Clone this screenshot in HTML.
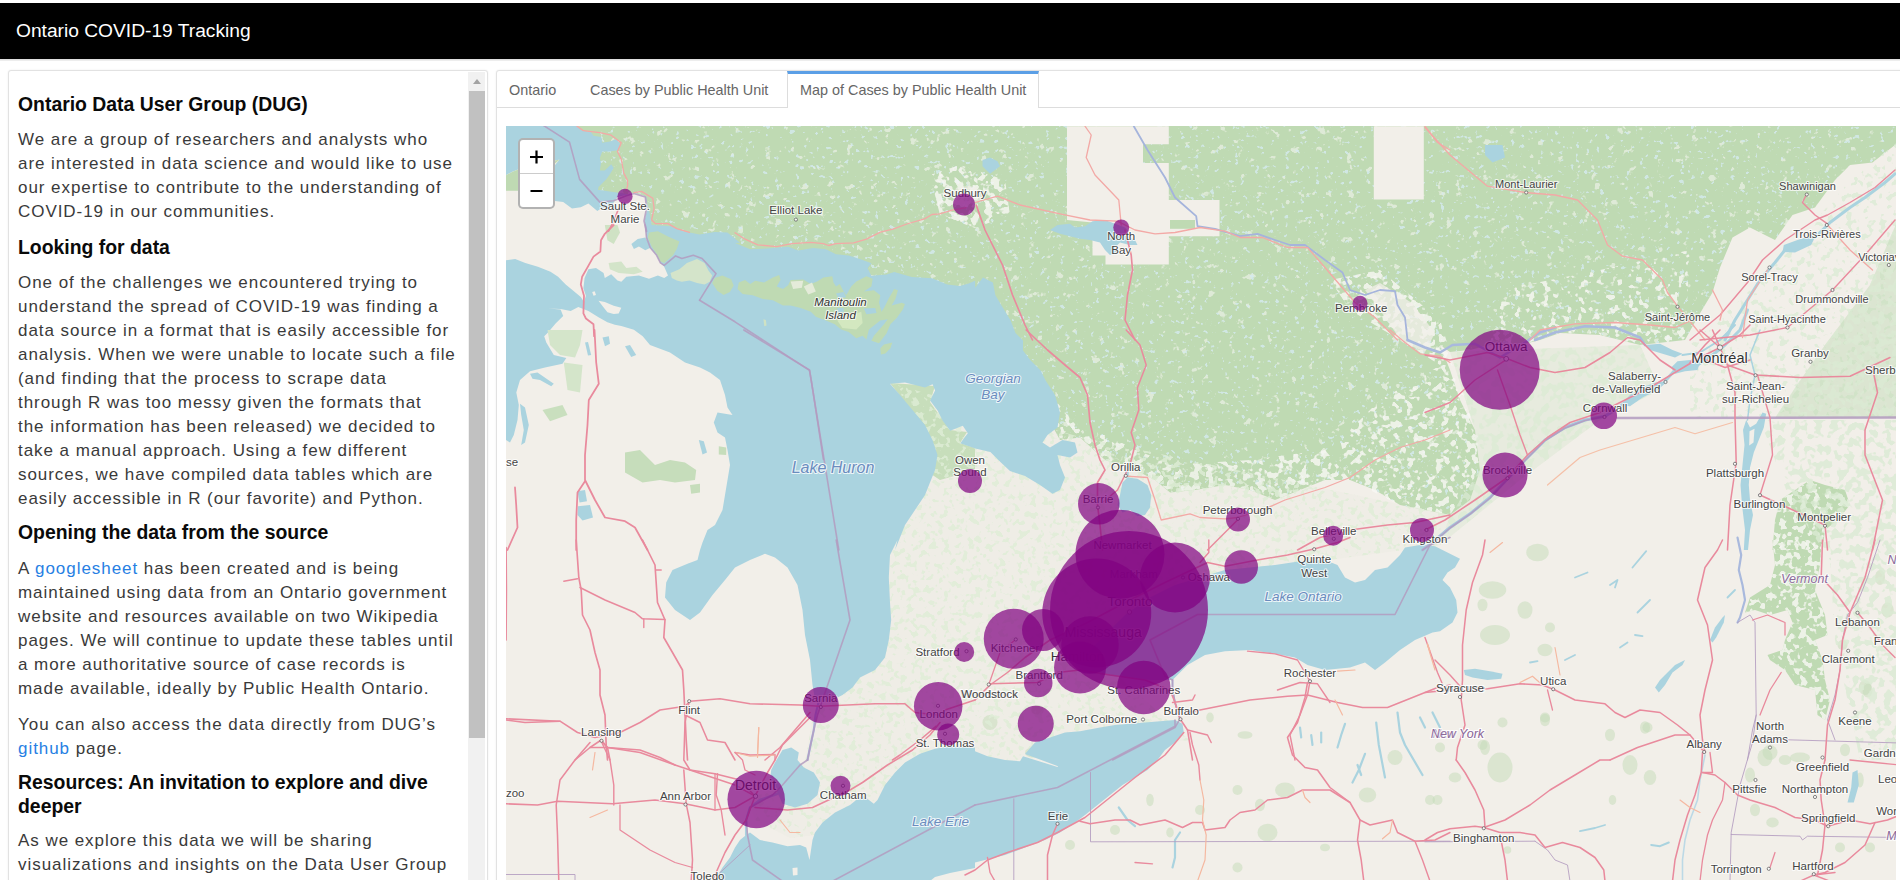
<!DOCTYPE html>
<html><head><meta charset="utf-8"><title>Ontario COVID-19 Tracking</title>
<style>
html,body{margin:0;padding:0;}
body{width:1900px;height:880px;overflow:hidden;background:#fff;font-family:"Liberation Sans",sans-serif;position:relative;}
.nav{position:absolute;left:0;top:3px;width:1900px;height:56px;background:#000;}
.nav .t{position:absolute;left:16px;top:16px;font-size:19.2px;line-height:24px;color:#fff;white-space:nowrap;}
.navsh{position:absolute;left:0;top:59px;width:1900px;height:2px;background:linear-gradient(#d8d8d8,#f4f4f4);}
.lp{position:absolute;left:8px;top:70px;width:479.5px;height:830px;border:1px solid #e2e2e2;border-radius:3px;background:#fff;box-sizing:border-box;box-shadow:0 0 2px rgba(0,0,0,.08);}
.p{position:absolute;left:18px;font-size:17px;line-height:24px;letter-spacing:.95px;color:#3a3a3a;white-space:nowrap;}
.h{position:absolute;left:18px;font-size:19.4px;line-height:24px;font-weight:bold;color:#0a0a0a;white-space:nowrap;}
.a{color:#2780e3;}
.sbt{position:absolute;left:468px;top:72px;width:17px;height:810px;background:#f1f1f1;}
.sbth{position:absolute;left:469px;top:91px;width:16px;height:647px;background:#c1c1c1;}
.sba{position:absolute;left:472.5px;top:79px;width:0;height:0;border-left:4.5px solid transparent;border-right:4.5px solid transparent;border-bottom:5px solid #a3a3a3;}
.rp{position:absolute;left:496px;top:70px;width:1420px;height:830px;border:1px solid #e2e2e2;border-radius:3px;background:#fff;box-sizing:border-box;box-shadow:0 0 2px rgba(0,0,0,.08);}
.tabline{position:absolute;left:497px;top:107px;width:1410px;height:1px;background:#ddd;}
.tab{position:absolute;top:72px;height:35px;font-size:14.4px;line-height:36px;color:#666;white-space:nowrap;}
.tab.act{top:71px;height:37px;background:#fff;border-left:1px solid #ddd;border-right:1px solid #ddd;border-top:3px solid #5b9fe6;box-sizing:border-box;line-height:33px;}
.map{position:absolute;left:506px;top:126px;width:1389.5px;height:760px;background:#f2efe9;overflow:hidden;}
.map svg{position:absolute;left:0;top:0;}
.zc{position:absolute;left:518px;top:138px;width:33px;height:67px;border:2px solid rgba(0,0,0,.3);border-radius:5px;background:#fff;}
.zc .ln{position:absolute;left:0;top:33px;width:33px;height:1px;background:#ccc;}
.zc span{position:absolute;left:0;width:33px;text-align:center;font-size:25px;font-weight:bold;color:#000;font-family:"Liberation Mono",monospace;}
</style></head><body>
<div class="nav"><div class="t">Ontario COVID-19 Tracking</div></div><div class="navsh"></div>
<div class="lp"></div>
<div class="h" style="top:92.3px">Ontario Data User Group (DUG)</div>
<div class="p" style="top:128.1px">We are a group of researchers and analysts who<br>are interested in data science and would like to use<br>our expertise to contribute to the understanding of<br>COVID-19 in our communities.</div>
<div class="h" style="top:234.8px">Looking for data</div>
<div class="p" style="top:271.1px">One of the challenges we encountered trying to<br>understand the spread of COVID-19 was finding a<br>data source in a format that is easily accessible for<br>analysis. When we were unable to locate such a file<br>(and finding that the process to scrape data<br>through R was too messy given the formats that<br>the information has been released) we decided to<br>take a manual approach. Using a few different<br>sources, we have compiled data tables which are<br>easily accessible in R (our favorite) and Python.</div>
<div class="h" style="top:520.3px">Opening the data from the source</div>
<div class="p" style="top:557.1px">A <span class="a">googlesheet</span> has been created and is being<br>maintained using data from an Ontario government<br>website and resources available on two Wikipedia<br>pages. We will continue to update these tables until<br>a more authoritative source of case records is<br>made available, ideally by Public Health Ontario.</div>
<div class="p" style="top:712.6px">You can also access the data directly from DUG&rsquo;s<br><span class="a">github</span> page.</div>
<div class="h" style="top:770.3px">Resources: An invitation to explore and dive<br>deeper</div>
<div class="p" style="top:828.6px">As we explore this data we will be sharing<br>visualizations and insights on the Data User Group<br>website.</div>
<div class="sbt"></div><div class="sbth"></div><div class="sba"></div>
<div class="rp"></div><div class="tabline"></div>
<div class="tab" style="left:509px">Ontario</div>
<div class="tab" style="left:590px">Cases by Public Health Unit</div>
<div class="tab act" style="left:787px;width:252px;padding-left:12px">Map of Cases by Public Health Unit</div>
<div class="map">
<svg width="1390" height="760" viewBox="506 126 1390 760">
<defs><filter id="s0" x="0" y="0" width="1" height="1"><feTurbulence type="fractalNoise" baseFrequency="0.15" numOctaves="2" seed="21"/><feColorMatrix type="matrix" values="0 0 0 0 0.949 0 0 0 0 0.937 0 0 0 0 0.914 14 0 0 0 -7.42"/><feComposite in2="SourceGraphic" operator="in"/></filter><filter id="s1" x="0" y="0" width="1" height="1"><feTurbulence type="fractalNoise" baseFrequency="0.15" numOctaves="2" seed="22"/><feColorMatrix type="matrix" values="0 0 0 0 0.949 0 0 0 0 0.937 0 0 0 0 0.914 14 0 0 0 -7.42"/><feComposite in2="SourceGraphic" operator="in"/></filter><filter id="s2" x="0" y="0" width="1" height="1"><feTurbulence type="fractalNoise" baseFrequency="0.11" numOctaves="3" seed="5"/><feColorMatrix type="matrix" values="0 0 0 0 0.949 0 0 0 0 0.937 0 0 0 0 0.914 14 0 0 0 -9.66"/><feComposite in2="SourceGraphic" operator="in"/></filter><filter id="s3" x="0" y="0" width="1" height="1"><feTurbulence type="fractalNoise" baseFrequency="0.2" numOctaves="2" seed="11"/><feColorMatrix type="matrix" values="0 0 0 0 0.667 0 0 0 0 0.827 0 0 0 0 0.875 14 0 0 0 -9.38"/><feComposite in2="SourceGraphic" operator="in"/></filter><filter id="s4" x="0" y="0" width="1" height="1"><feTurbulence type="fractalNoise" baseFrequency="0.16" numOctaves="2" seed="7"/><feColorMatrix type="matrix" values="0 0 0 0 0.737 0 0 0 0 0.847 0 0 0 0 0.678 14 0 0 0 -7.7"/><feComposite in2="SourceGraphic" operator="in"/></filter><filter id="s5" x="0" y="0" width="1" height="1"><feTurbulence type="fractalNoise" baseFrequency="0.12" numOctaves="2" seed="9"/><feColorMatrix type="matrix" values="0 0 0 0 0.710 0 0 0 0 0.827 0 0 0 0 0.659 14 0 0 0 -7"/><feComposite in2="SourceGraphic" operator="in"/></filter><filter id="s6" x="0" y="0" width="1" height="1"><feTurbulence type="fractalNoise" baseFrequency="0.14" numOctaves="2" seed="31"/><feColorMatrix type="matrix" values="0 0 0 0 0.949 0 0 0 0 0.937 0 0 0 0 0.914 14 0 0 0 -7.7"/><feComposite in2="SourceGraphic" operator="in"/></filter><filter id="s7" x="0" y="0" width="1" height="1"><feTurbulence type="fractalNoise" baseFrequency="0.14" numOctaves="2" seed="32"/><feColorMatrix type="matrix" values="0 0 0 0 0.949 0 0 0 0 0.937 0 0 0 0 0.914 14 0 0 0 -7.28"/><feComposite in2="SourceGraphic" operator="in"/></filter><filter id="s8" x="0" y="0" width="1" height="1"><feTurbulence type="fractalNoise" baseFrequency="0.14" numOctaves="2" seed="33"/><feColorMatrix type="matrix" values="0 0 0 0 0.949 0 0 0 0 0.937 0 0 0 0 0.914 14 0 0 0 -7"/><feComposite in2="SourceGraphic" operator="in"/></filter><filter id="s9" x="0" y="0" width="1" height="1"><feTurbulence type="fractalNoise" baseFrequency="0.14" numOctaves="2" seed="34"/><feColorMatrix type="matrix" values="0 0 0 0 0.949 0 0 0 0 0.937 0 0 0 0 0.914 14 0 0 0 -7"/><feComposite in2="SourceGraphic" operator="in"/></filter><filter id="s10" x="0" y="0" width="1" height="1"><feTurbulence type="fractalNoise" baseFrequency="0.14" numOctaves="2" seed="35"/><feColorMatrix type="matrix" values="0 0 0 0 0.949 0 0 0 0 0.937 0 0 0 0 0.914 14 0 0 0 -8.12"/><feComposite in2="SourceGraphic" operator="in"/></filter><filter id="s11" x="0" y="0" width="1" height="1"><feTurbulence type="fractalNoise" baseFrequency="0.14" numOctaves="2" seed="36"/><feColorMatrix type="matrix" values="0 0 0 0 0.949 0 0 0 0 0.937 0 0 0 0 0.914 14 0 0 0 -7.7"/><feComposite in2="SourceGraphic" operator="in"/></filter><filter id="s12" x="0" y="0" width="1" height="1"><feTurbulence type="fractalNoise" baseFrequency="0.15" numOctaves="2" seed="41"/><feColorMatrix type="matrix" values="0 0 0 0 0.710 0 0 0 0 0.827 0 0 0 0 0.659 14 0 0 0 -7.98"/><feComposite in2="SourceGraphic" operator="in"/></filter><filter id="s13" x="0" y="0" width="1" height="1"><feTurbulence type="fractalNoise" baseFrequency="0.13" numOctaves="2" seed="42"/><feColorMatrix type="matrix" values="0 0 0 0 0.710 0 0 0 0 0.827 0 0 0 0 0.659 14 0 0 0 -7"/><feComposite in2="SourceGraphic" operator="in"/></filter><filter id="s14" x="0" y="0" width="1" height="1"><feTurbulence type="fractalNoise" baseFrequency="0.13" numOctaves="2" seed="51"/><feColorMatrix type="matrix" values="0 0 0 0 0.710 0 0 0 0 0.827 0 0 0 0 0.659 14 0 0 0 -7"/><feComposite in2="SourceGraphic" operator="in"/></filter></defs>
<g><polygon points="560,120 1900,120 1900,340 1685,340 1640,345 1600,335 1560,333 1540,340 1520,345 1490,345 1470,350 1450,352 1440,345 1450,370 1460,400 1475,430 1480,470 1470,500 1450,515 1425,510 1400,505 1375,490 1350,480 1325,480 1300,490 1275,500 1250,490 1225,485 1195,490 1170,492.5 1155,480 1135,470 1105,460 1080,437.5 1060,440 1000,330 975,295 740,250 650,232 630,200 600,190 560,190" fill="#bfdab3"/><polygon points="505.1,175.6 512.6,171.8 518.3,169.5 537.9,164.2 554.9,160.4 559.4,159.8 554.9,163.6 550.5,170.5 537.9,180.6 518.3,190.7 505.1,190.7" fill="#bfdab3" /><polygon points="1772.5,540 1822.5,540 1820,565 1815,590 1825,615 1827.5,635 1815,640 1822.5,660 1825,680 1830,700 1825,720 1817.5,715 1815,690 1795,685 1785,670 1770,660 1767.5,655 1782.5,650 1785,640 1792.5,622.5 1787.5,610 1770,615 1755,610 1745,612.5 1750,597.5 1770,585 1775,565" fill="#bfdab3" /><polygon points="1772.5,550 1775,520 1780,500 1795,490 1810,480 1825,485 1845,490 1850,505 1837.5,520 1825,530 1822.5,550" fill="#bfdab3" /><polygon points="560,120 1900,120 1900,340 1685,340 1640,345 1600,335 1560,333 1540,340 1520,345 1490,345 1470,350 1450,352 1440,345 1450,370 1460,400 1475,430 1480,470 1470,500 1450,515 1425,510 1400,505 1375,490 1350,480 1325,480 1300,490 1275,500 1250,490 1225,485 1195,490 1170,492.5 1155,480 1135,470 1105,460 1080,437.5 1060,440 1000,330 975,295 740,250 650,232 630,200 600,190 560,190" fill="#fff" filter="url(#s2)" opacity="0.55"/><polygon points="560,120 1900,120 1900,340 1685,340 1640,345 1600,335 1560,333 1540,340 1520,345 1490,345 1470,350 1450,352 1440,345 1450,370 1460,400 1475,430 1480,470 1470,500 1450,515 1425,510 1400,505 1375,490 1350,480 1325,480 1300,490 1275,500 1250,490 1225,485 1195,490 1170,492.5 1155,480 1135,470 1105,460 1080,437.5 1060,440 1000,330 975,295 740,250 650,232 630,200 600,190 560,190" fill="#fff" filter="url(#s3)" opacity="0.8"/><polygon points="1380,400 1450,360 1480,430 1480,470 1450,515 1400,505 1350,480 1340,440" fill="#fff" filter="url(#s6)" opacity="0.8"/><polygon points="1080,437 1105,435 1170,465 1250,460 1325,450 1350,480 1325,480 1300,490 1275,500 1250,490 1225,485 1195,490 1170,492 1155,480 1135,470 1105,460" fill="#fff" filter="url(#s7)" opacity="0.8"/><polygon points="930,175 960,165 1005,180 1010,215 975,228 940,215" fill="#fff" filter="url(#s8)" opacity="0.8"/><polygon points="1330,280 1380,270 1440,320 1450,352 1440,365 1400,340 1350,310" fill="#fff" filter="url(#s9)" opacity="0.8"/><polygon points="1500,290 1600,270 1690,250 1685,340 1640,345 1600,335 1560,333 1520,345 1490,345" fill="#fff" filter="url(#s10)" opacity="0.8"/><polygon points="1060,440 1085,440 1080,430 1055,400 1045,380" fill="#fff" filter="url(#s11)" opacity="0.8"/></g>
<g><polygon points="1685,340 1697.5,317.5 1712.5,292.5 1720,267.5 1732.5,237.5 1750,227.5 1775,240 1792.5,215 1815,207.5 1835,180 1850,165 1872.5,162.5 1895,145 1900,145 1900,340" fill="#f2efe9" /><polygon points="1772.5,540 1822.5,540 1820,565 1815,590 1825,615 1827.5,635 1815,640 1822.5,660 1825,680 1830,700 1825,720 1817.5,715 1815,690 1795,685 1785,670 1770,660 1767.5,655 1782.5,650 1785,640 1792.5,622.5 1787.5,610 1770,615 1755,610 1745,612.5 1750,597.5 1770,585 1775,565" fill="#fff" filter="url(#s0)" opacity="0.8"/><ellipse cx="1537.5" cy="552.5" rx="11.25" ry="8.75" fill="#c4dcb8" opacity=".5"/><ellipse cx="1492.5" cy="590" rx="13.75" ry="8.75" fill="#c4dcb8" opacity=".5"/><ellipse cx="1525" cy="610" rx="7.5" ry="8.75" fill="#c4dcb8" opacity=".5"/><ellipse cx="1495" cy="635" rx="15" ry="10" fill="#c4dcb8" opacity=".5"/><ellipse cx="1545" cy="650" rx="7.5" ry="6.25" fill="#c4dcb8" opacity=".5"/><ellipse cx="1482.5" cy="605" rx="5" ry="6.25" fill="#c4dcb8" opacity=".5"/><ellipse cx="1550" cy="627.5" rx="5" ry="5" fill="#c4dcb8" opacity=".5"/><ellipse cx="1842.5" cy="645" rx="5" ry="5" fill="#c4dcb8" opacity=".5"/><ellipse cx="1865" cy="687.5" rx="6.25" ry="7.5" fill="#c4dcb8" opacity=".5"/><ellipse cx="1887.5" cy="610" rx="6.25" ry="7.5" fill="#c4dcb8" opacity=".5"/><ellipse cx="1645" cy="727.5" rx="5" ry="6.25" fill="#c4dcb8" opacity=".5"/><ellipse cx="1502.5" cy="722.5" rx="5" ry="5" fill="#c4dcb8" opacity=".5"/><ellipse cx="1545" cy="720" rx="5" ry="6.25" fill="#c4dcb8" opacity=".5"/><ellipse cx="1610" cy="735" rx="5" ry="6.25" fill="#c4dcb8" opacity=".5"/><ellipse cx="1485" cy="747.5" rx="5" ry="7.5" fill="#c4dcb8" opacity=".5"/><ellipse cx="1770" cy="752.5" rx="7.5" ry="7.5" fill="#c4dcb8" opacity=".5"/><ellipse cx="1800" cy="757.5" rx="10" ry="5" fill="#c4dcb8" opacity=".5"/><ellipse cx="1880" cy="577.5" rx="5" ry="7.5" fill="#c4dcb8" opacity=".5"/><ellipse cx="1267.5" cy="832.5" rx="10" ry="8.75" fill="#c4dcb8" opacity=".5"/><ellipse cx="1285" cy="790" rx="10" ry="7.5" fill="#c4dcb8" opacity=".5"/><ellipse cx="1367.5" cy="795" rx="8.75" ry="7.5" fill="#c4dcb8" opacity=".5"/><ellipse cx="1260" cy="805" rx="5" ry="6.25" fill="#c4dcb8" opacity=".5"/><ellipse cx="1200" cy="810" rx="5" ry="5" fill="#c4dcb8" opacity=".5"/><ellipse cx="1150" cy="800" rx="3.75" ry="6.25" fill="#c4dcb8" opacity=".5"/><ellipse cx="1170" cy="832.5" rx="3.75" ry="5" fill="#c4dcb8" opacity=".5"/><ellipse cx="1115" cy="830" rx="5" ry="5" fill="#c4dcb8" opacity=".5"/><ellipse cx="1237.5" cy="867.5" rx="5" ry="5" fill="#c4dcb8" opacity=".5"/><ellipse cx="1325" cy="847.5" rx="5" ry="3.75" fill="#c4dcb8" opacity=".5"/><ellipse cx="1430" cy="800" rx="5" ry="5" fill="#c4dcb8" opacity=".5"/><ellipse cx="1395" cy="757.5" rx="7.5" ry="7.5" fill="#c4dcb8" opacity=".5"/><ellipse cx="1210" cy="717.5" rx="3.75" ry="5" fill="#c4dcb8" opacity=".5"/><ellipse cx="1245" cy="735" rx="7.5" ry="3.75" fill="#c4dcb8" opacity=".5"/><ellipse cx="1070" cy="845" rx="5" ry="5" fill="#c4dcb8" opacity=".5"/><ellipse cx="1237.5" cy="790" rx="5" ry="5" fill="#c4dcb8" opacity=".5"/><ellipse cx="1037.5" cy="710" rx="6.25" ry="5" fill="#c4dcb8" opacity=".5"/><ellipse cx="1032.5" cy="752.5" rx="7.5" ry="5" fill="#c4dcb8" opacity=".5"/><ellipse cx="990" cy="722.5" rx="7.5" ry="7.5" fill="#c4dcb8" opacity=".5"/><ellipse cx="1500" cy="767.5" rx="12.5" ry="15" fill="#c4dcb8" opacity=".5"/><ellipse cx="1630" cy="765" rx="7.5" ry="10" fill="#c4dcb8" opacity=".5"/><ellipse cx="1650" cy="777.5" rx="6.25" ry="7.5" fill="#c4dcb8" opacity=".5"/><ellipse cx="1765" cy="757.5" rx="7.5" ry="8.75" fill="#c4dcb8" opacity=".5"/><ellipse cx="1750" cy="775" rx="5" ry="7.5" fill="#c4dcb8" opacity=".5"/><ellipse cx="1755" cy="810" rx="5" ry="6.25" fill="#c4dcb8" opacity=".5"/><ellipse cx="1785" cy="760" rx="6.25" ry="5" fill="#c4dcb8" opacity=".5"/><ellipse cx="1845" cy="750" rx="5" ry="6.25" fill="#c4dcb8" opacity=".5"/><ellipse cx="1860" cy="780" rx="3.75" ry="7.5" fill="#c4dcb8" opacity=".5"/><ellipse cx="1440" cy="747.5" rx="5" ry="5" fill="#c4dcb8" opacity=".5"/><ellipse cx="1437.5" cy="800" rx="5" ry="5" fill="#c4dcb8" opacity=".5"/><ellipse cx="1545" cy="717.5" rx="5" ry="5" fill="#c4dcb8" opacity=".5"/><ellipse cx="1647.5" cy="727.5" rx="5" ry="5" fill="#c4dcb8" opacity=".5"/><ellipse cx="1482.5" cy="745" rx="5" ry="5" fill="#c4dcb8" opacity=".5"/><ellipse cx="1455" cy="777.5" rx="6.25" ry="5" fill="#c4dcb8" opacity=".5"/><ellipse cx="1612.5" cy="800" rx="3.75" ry="5" fill="#c4dcb8" opacity=".5"/><ellipse cx="1772.5" cy="822.5" rx="6.25" ry="5" fill="#c4dcb8" opacity=".5"/><ellipse cx="1840" cy="847.5" rx="5" ry="5" fill="#c4dcb8" opacity=".5"/><ellipse cx="1870" cy="847.5" rx="5" ry="5" fill="#c4dcb8" opacity=".5"/><ellipse cx="1507.5" cy="850" rx="3.75" ry="3.75" fill="#c4dcb8" opacity=".5"/><ellipse cx="1867.5" cy="690" rx="5" ry="7.5" fill="#c4dcb8" opacity=".5"/><polygon points="1365,290 1380,283 1412,303 1435,333 1425,352 1402,342 1382,313" fill="#f2efe9" opacity=".75"/><ellipse cx="968" cy="195" rx="16" ry="9" fill="#f2efe9" opacity=".6"/><polygon points="890,383 1080,437 1450,515 1440,545 1180,580 1100,660 1190,740 975,765 860,830 790,838 755,820 748,800 770,790 805,762 812,722 821,703 895,540" fill="#bfdab3" opacity="0.05"/><polygon points="1450,515 1480,470 1475,430 1450,352 1640,345 1660,390 1600,420 1520,480 1440,545" fill="#bfdab3" opacity="0.2"/><polygon points="890,383 935,386 930,402 950,430 967,432 960,443 975,448 975,470 940,480 925,470 930,440 915,415" fill="#bfdab3" opacity="0.85"/><polygon points="1772.5,550 1775,520 1780,500 1795,490 1810,480 1825,485 1845,490 1850,505 1837.5,520 1825,530 1822.5,550" fill="#fff" filter="url(#s1)" opacity="0.8"/><polygon points="890,383 1080,437 1450,515 1440,545 1180,580 1100,660 1190,740 975,765 860,830 790,838 755,820 748,800 770,790 805,762 812,722 821,703 895,540" fill="#fff" filter="url(#s4)" opacity="0.8"/><polygon points="1450,515 1480,470 1475,430 1450,352 1640,345 1660,390 1600,420 1520,480 1440,545" fill="#fff" filter="url(#s5)" opacity="0.7"/><polygon points="1690,345 1740,300 1790,250 1850,180 1900,140 1900,418 1690,418" fill="#fff" filter="url(#s12)" opacity="0.75"/><polygon points="1900,215 1870,285 1825,345 1797,385 1775,418 1900,418" fill="#bfdab3" opacity=".45"/><polygon points="1900,215 1870,285 1825,345 1797,385 1775,418 1900,418" fill="#fff" filter="url(#s13)" opacity="0.8"/><polygon points="1760,420 1900,420 1900,760 1860,760 1835,640 1830,560 1790,500" fill="#fff" filter="url(#s14)" opacity="0.8"/></g>
<g><polygon points="1067,126.2 1168.8,126.2 1168.8,144.2 1143,144.2 1143,163 1168.8,163 1168.8,200 1219.5,200 1219.5,236.2 1168.8,236.2 1168.8,264.5 1105.5,264.5 1105.5,255.5 1092.5,255.5 1092.5,222.5 1067,220" fill="#f2efe9" /><polygon points="1170,220 1195,220 1195,228.8 1170,228.8" fill="#bfdab3" /><polygon points="1373.8,126.2 1423.8,126.2 1423.8,199.5 1373.8,199.5" fill="#f2efe9" /></g>
<g><polygon points="505.1,125.1 577,125.1 582.1,130.7 590.9,132 593.5,135.8 601,137.1 602.3,142.7 609.9,141.5 616.2,138.9 620,144 617.5,150.3 609.9,151.6 602.3,151.6 599.8,157.9 601,162.9 599.8,170.5 604.8,170.5 611.2,164.2 613.7,168 609.9,174.3 606.1,179.4 598.5,186.9 597.3,194.5 601,200.8 609.9,202.1 617.5,195.8 621.3,198.3 611.2,205.9 601,208.4 597.3,210.9 588.4,203.4 580.8,207.2 572,208.4 563.2,202.1 554.9,200.8 550.5,195.8 548,183.2 550.5,170.5 559.4,159.8 554.9,160.4 537.9,164.2 518.3,169.5 512.6,171.8 505.1,175.6" fill="#aad3df" /><polygon points="1050,230 1057.5,225 1070,223.8 1075,227.5 1085,226.2 1092.5,221.2 1105,220 1115,223.8 1125,227.5 1128.8,231.2 1125,235 1135,240 1137.5,245 1130,245 1120,242.5 1115,247.5 1117.5,252.5 1110,255 1105,250 1100,242.5 1090,240 1080,238.8 1070,236.2 1060,233.8" fill="#aad3df" /><polygon points="982.5,160 990,157.5 997.5,161.2 1000,166.2 995,170 990,173.8 986.2,170 982.5,166.2" fill="#aad3df" /><polygon points="1815,237 1811.2,245 1795,252.5 1782.5,252 1783.8,245 1797.5,240 1807.5,237" fill="#aad3df" /><polygon points="1485,145 1502.5,145 1505,157.5 1492.5,162.5 1485,155" fill="#aad3df" /><polygon points="1122.5,482.5 1127.5,477.5 1137.5,478.8 1147.5,485 1151.2,495 1150,507.5 1145,515 1137.5,516.2 1130,510 1122.5,512.5 1117.5,505 1120,495" fill="#aad3df" /><polygon points="1125,466.2 1128.8,466.2 1128.8,477.5 1125,477.5" fill="#aad3df" /><polygon points="1620,405 1630,395 1645,386.2 1660,381.2 1666.2,382.5 1657.5,390 1642.5,397.5 1630,406.2" fill="#aad3df" /><polygon points="1671.2,367.5 1677.5,361.2 1690,360 1700,362.5 1697.5,370 1685,371.2 1675,373.8" fill="#aad3df" /><polygon points="1645,345 1660,343.8 1672.5,350 1682.5,353.8 1675,357.5 1662.5,353.8 1650,350" fill="#aad3df" /><polygon points="1746.2,420 1750,427.5 1756.2,423.8 1762.5,412.5 1766.2,413.8 1763.8,427.5 1758.8,440 1753.8,452.5 1750,467.5 1748.8,485 1750,500 1753,515 1750,530 1748,550 1743.8,550 1745,530 1742,505 1740.5,485 1742.5,465 1744.5,445 1743,430" fill="#aad3df" /><polygon points="1463.8,670 1475,668.8 1490,671.2 1502.5,673.8 1501.2,678.8 1487.5,680 1472.5,677.5 1465,675" fill="#aad3df" /><polygon points="1655,687.5 1660,680 1665,675 1675,665 1685,660 1682.5,665 1672.5,672.5 1665,685 1658.8,692.5" fill="#aad3df" /><polygon points="1710,640 1715,627.5 1722.5,617.5 1725,615 1723.8,622.5 1716.2,637.5 1712.5,642.5" fill="#aad3df" /><polygon points="778.8,756.2 782.5,750 791.2,747.5 798.8,752.5 797.5,760 803.8,767.5 813.8,772.5 820,782.5 817.5,795 807.5,803.8 795,807.5 782.5,803.8 777.5,792.5 770,780 771.2,770 775,762.5" fill="#aad3df" /><polygon points="1852.5,772.5 1857.5,770 1858.8,785 1853.8,802.5 1847.5,802.5 1851.2,787.5" fill="#aad3df" /><polygon points="646,197 650,215 651.6,225 670.5,226.3 683.2,231.3 699.6,234.5 714.7,231.9 727.4,232.6 733.7,237.6 740,242.7 735,242.9 750.2,249.3 766.6,248.6 788.1,246.7 798.2,250.5 813.3,248 825.9,249.3 836,254.3 848.7,255.6 861.3,259.4 871.4,263.2 867.6,268.2 871.4,275.8 886.6,274.5 894.2,272 911.8,277 932,278.3 947.2,284.6 959.8,285.9 968.7,283.4 975,280.8 975.3,287.7 982.9,277.6 992.9,282.6 995.4,295.2 1002.9,307.7 1010.5,320.3 1015.5,332.9 1023,340.4 1023,350.4 1030.6,360.5 1040.6,370.5 1045.6,380.6 1055,395 1060,412.5 1057.5,427.5 1047.5,435 1042.5,442.5 1050,447.5 1062.5,440 1075,442.5 1077.5,452.5 1070,457.5 1057.5,455 1060,465 1065,477.5 1060,490 1052.5,493.75 1040,485 1025,476 1010,471 1000.4,462 990.4,452 975.3,448.4 960.3,443.3 967.8,433.3 962.8,425.8 950.2,430.8 942.7,420.7 937.7,410.7 930.1,400.6 935.1,390.6 932.6,384.3 925,387.5 905,382.5 890,383.75 900,395 912.5,410 925,425 932.5,440 937.5,455 935,470 930,482.5 925,495 915,510 905,525 900,537.5 895,550 897.5,540 890,555 888.8,577.5 890,602.5 891.2,620 888.8,640 885,657.5 875,670 860,677.5 852.5,687.5 842.5,695 832.5,700 822.5,702.5 815,700 812.5,685 810,660 805,635 802.5,610 797.5,585 787.5,567.5 775,557.5 765,553.8 750,560 735,567.5 725,580 712.5,595 700,612.5 690,620 675,610 665,597.5 666.2,582.5 672.5,570 687.5,563.8 697.5,560 700,550 700,550 702.5,542.5 707.5,530 715,525 722.5,510 725,495 727.5,480 730,465 727.5,450 725,437.5 717.5,432.5 713.8,422.5 717.5,412.5 732.5,415 727.5,407.5 725,395 720,380 710,372.5 700,367.5 685,362.5 670,352.5 650,345 642.7,336.2 633.9,329.8 621.3,326 614.9,324.8 607.4,322.3 598.5,317.2 588.4,310.9 578.3,307.1 570.7,310.9 560.6,309 548,308.4 560.6,309.6 563.2,315.9 555.6,323.5 548,332.4 544.2,336.2 546.3,342.5 553.8,355 566.3,358 562.5,363.8 545,367.5 530,371.3 520,380 516.3,392.5 518.8,405 517.5,420 513.8,435 510,442.5 506,440 500,440 500,190 600,190" fill="#aad3df" /><polygon points="1075,665 1100,640 1125,615 1150,597.5 1175,585 1200,577.5 1225,570 1250,567.5 1275,565 1300,561.2 1325,560 1337.5,565 1345,577.5 1355,582.5 1365,580 1375,570 1387.5,567.5 1400,555 1405,547.5 1420,545 1437.5,540 1437.5,540 1425,540 1425,545 1435,546.2 1447.5,552.5 1460,558.8 1455,567.5 1447.5,572.5 1442.5,580 1450,587.5 1456.2,600 1457.5,612.5 1452.5,622.5 1440,631.2 1432.5,632.5 1415,640 1400,650 1385,662.5 1375,670 1365,662.5 1350,667.5 1325,670 1307.5,665 1295,657.5 1275,653.8 1250,650 1225,651.2 1205,655 1187.5,665 1172.5,680 1150,680 1115,676.2 1087.5,672.5" fill="#aad3df" /><polygon points="712.5,885 715,880 722.5,867.5 730,857.5 735,847.5 740,840 746.2,835 750,832.5 760,840 772.5,842.5 787.5,846.2 800,845 806.2,847.5 809.5,860 812.5,840 815,832.5 822.5,822.5 835,812.5 850,805 862.5,795 873.8,803.8 877.5,800 885,785 895,772.5 905,762.5 920,753.8 935,748.8 950,746.2 975,747.5 975,751.2 987.5,756.2 1005,760 1020,761.2 1023,756.2 1057.5,767 1058,766.2 1025,754 1035,742.5 1050,737.5 1065,732.5 1080,731.2 1100,727.5 1115,725 1130,723.8 1145,722.5 1160,721.2 1175,720 1182.5,723.8 1183.8,732.5 1175,742.5 1165,750 1157.5,760 1147.5,770 1135,777.5 1122.5,785 1110,795 1097.5,805 1085,815 1075,822.5 1060,832.5 1045,840 1025,847.5 1005,855 985,860 975,862.5 975,890 700,890" fill="#aad3df" /></g>
<g><polyline points="617.5,197 626.3,195.8 633.9,193.5 645.3,197 646.5,208.4 644,221 646.5,231.2" fill="none" stroke="#a9b9dd" stroke-width="1.8" stroke-linejoin="round" stroke-linecap="round" /><polyline points="1133.8,126.2 1147.5,150 1165,177.5 1175,197.5 1196.2,216.2 1197.5,226.2 1215,228.8 1240,236.2 1257.5,233.8 1275,240 1290,245 1305,245 1325,260 1342.5,272.5 1350,290 1365,295 1380,290 1395,291.2 1397.5,305 1405,317.5 1407.5,340" fill="none" stroke="#a5b4dc" stroke-width="1.8" stroke-linejoin="round" stroke-linecap="round" /><polyline points="1895,173.8 1885,182.5 1865,197.5 1850,207.5 1830,222.5 1815,237.5" fill="none" stroke="#aad3df" stroke-width="3" stroke-linejoin="round" stroke-linecap="round" /><polyline points="1785,250 1775,262.5 1760,280 1747.5,300 1735,320 1725,340" fill="none" stroke="#aad3df" stroke-width="3" stroke-linejoin="round" stroke-linecap="round" /><polyline points="1535,340 1555,332.5 1585,326.2 1615,327.5 1640,337.5 1645,345" fill="none" stroke="#a9b9dd" stroke-width="2.5" stroke-linejoin="round" stroke-linecap="round" /><polyline points="1422.5,550 1432.5,542.5 1450,527.5 1470,513.8 1490,497.5 1507.5,478.8 1525,460 1545,440 1565,427.5 1585,420 1605,416.2 1622.5,405" fill="none" stroke="#a9c4dd" stroke-width="3" stroke-linejoin="round" stroke-linecap="round" /><polyline points="1665,381.2 1675,370" fill="none" stroke="#aad3df" stroke-width="3" stroke-linejoin="round" stroke-linecap="round" /><polyline points="1697.5,365 1712.5,355 1725,345 1740,330 1747.5,310" fill="none" stroke="#aad3df" stroke-width="3" stroke-linejoin="round" stroke-linecap="round" /><polyline points="1682.5,355 1700,352.5 1720,340 1735,325" fill="none" stroke="#aad3df" stroke-width="2" stroke-linejoin="round" stroke-linecap="round" /><polyline points="1407.5,340 1425,347.5 1440,352.5 1452.5,345 1475,343.8 1500,357.5 1525,342.5 1540,332.5 1555,327.5" fill="none" stroke="#a9b9dd" stroke-width="2.5" stroke-linejoin="round" stroke-linecap="round" /><polyline points="1747.5,420 1750,400 1755,375 1750,355 1760,330" fill="none" stroke="#aad3df" stroke-width="1.5" stroke-linejoin="round" stroke-linecap="round" /><polyline points="818.8,701.2 815.5,715 813.8,730 810,747.5 807.5,760" fill="none" stroke="#a9b9dd" stroke-width="2.2" stroke-linejoin="round" stroke-linecap="round" /><polyline points="1180,718.8 1175,702.5 1172.5,690 1172.5,680" fill="none" stroke="#a9b9dd" stroke-width="1.8" stroke-linejoin="round" stroke-linecap="round" /><polyline points="1737.5,537.5 1741.2,555 1738.8,570 1742.5,585 1745,600 1740,617.5 1737.5,622.5" fill="none" stroke="#a9b9dd" stroke-width="2.2" stroke-linejoin="round" stroke-linecap="round" /><polyline points="1575,577.5 1587.5,572.5" fill="none" stroke="#aad3df" stroke-width="1.8" stroke-linejoin="round" stroke-linecap="round" /><polyline points="1610,585 1617.5,580 1615,587.5" fill="none" stroke="#aad3df" stroke-width="1.8" stroke-linejoin="round" stroke-linecap="round" /><polyline points="1637.5,612.5 1650,600" fill="none" stroke="#aad3df" stroke-width="1.8" stroke-linejoin="round" stroke-linecap="round" /><polyline points="1620,647.5 1627.5,642.5" fill="none" stroke="#aad3df" stroke-width="1.8" stroke-linejoin="round" stroke-linecap="round" /><polyline points="1635,635 1642.5,636.2" fill="none" stroke="#aad3df" stroke-width="1.8" stroke-linejoin="round" stroke-linecap="round" /><polyline points="1565,660 1575,655" fill="none" stroke="#aad3df" stroke-width="1.8" stroke-linejoin="round" stroke-linecap="round" /><polyline points="1530,662.5 1537.5,661.2" fill="none" stroke="#aad3df" stroke-width="1.8" stroke-linejoin="round" stroke-linecap="round" /><polyline points="1727.5,597.5 1735,590" fill="none" stroke="#aad3df" stroke-width="1.8" stroke-linejoin="round" stroke-linecap="round" /><polyline points="1632.5,567.5 1646.2,551.2" fill="none" stroke="#aad3df" stroke-width="1.8" stroke-linejoin="round" stroke-linecap="round" /><polyline points="777.5,793.8 760,800 750,807.5 746.2,820 746.2,835 750,845" fill="none" stroke="#aad3df" stroke-width="2.5" stroke-linejoin="round" stroke-linecap="round" /><polyline points="1300,727.5 1301.2,737.5" fill="none" stroke="#aad3df" stroke-width="2.2" stroke-linejoin="round" stroke-linecap="round" /><polyline points="1311.2,735 1312.5,745" fill="none" stroke="#aad3df" stroke-width="2.2" stroke-linejoin="round" stroke-linecap="round" /><polyline points="1321.2,732.5 1321.2,742.5" fill="none" stroke="#aad3df" stroke-width="2.2" stroke-linejoin="round" stroke-linecap="round" /><polyline points="1345,723.8 1341.2,735 1337.5,747.5" fill="none" stroke="#aad3df" stroke-width="2.2" stroke-linejoin="round" stroke-linecap="round" /><polyline points="1365,753.8 1358.8,770 1352.5,782.5" fill="none" stroke="#aad3df" stroke-width="2.2" stroke-linejoin="round" stroke-linecap="round" /><polyline points="1376.2,722.5 1378.8,745 1385,777.5" fill="none" stroke="#aad3df" stroke-width="2.2" stroke-linejoin="round" stroke-linecap="round" /><polyline points="1397.5,712.5 1400,732.5 1405,745 1422.5,775" fill="none" stroke="#aad3df" stroke-width="2.2" stroke-linejoin="round" stroke-linecap="round" /><polyline points="1420,717.5 1425,727.5" fill="none" stroke="#aad3df" stroke-width="2.2" stroke-linejoin="round" stroke-linecap="round" /><polyline points="1432.5,712.5 1440,727.5" fill="none" stroke="#aad3df" stroke-width="2.2" stroke-linejoin="round" stroke-linecap="round" /><polyline points="1118.8,807.5 1127.5,820 1135,826.2" fill="none" stroke="#aad3df" stroke-width="2.2" stroke-linejoin="round" stroke-linecap="round" /><polyline points="1180,832.5 1175,840 1175,857.5 1172.5,867.5" fill="none" stroke="#aad3df" stroke-width="2.2" stroke-linejoin="round" stroke-linecap="round" /><polyline points="1357.5,765 1361.2,775" fill="none" stroke="#aad3df" stroke-width="2.2" stroke-linejoin="round" stroke-linecap="round" /><polyline points="1705,755 1700,780 1697.5,800 1690,820 1685,840 1682.5,860 1682.5,881.2" fill="none" stroke="#bcd9e6" stroke-width="1.6" stroke-linejoin="round" stroke-linecap="round" /><polyline points="1580,831.2 1595,828 1605,825" fill="none" stroke="#aad3df" stroke-width="1.8" stroke-linejoin="round" stroke-linecap="round" /><polyline points="1651.2,845 1660,846.2 1668.8,842.5" fill="none" stroke="#aad3df" stroke-width="2" stroke-linejoin="round" stroke-linecap="round" /></g>
<g><polygon points="505.1,175.6 512.6,171.8 518.3,169.5 537.9,164.2 554.9,160.5 559.4,159.8 554.9,163.6 550.5,170.6 548,183.2 550.5,195.8 554.9,200.9 563.2,202.1 572,208.5 580.8,207.2 588.4,203.4 597.3,211 601,208.5 611.2,205.9 617.5,197.1 626.3,194.7 633.9,192.8 645.3,196.2 647.2,208.5 644.6,221.1 645.3,225 646.5,237.6 650.3,247.7 656.6,255.3 660.4,262.9 664.2,266.7 668,275.5 664.2,278.1 657.9,275.5 649,278.7 638.9,275.5 626.3,276.8 621.3,281.8 617.5,280.6 611.2,274.3 604.8,278.1 603.6,273 596,267.9 588.4,269.2 584.6,278.1 583.4,288.2 585.9,295.7 584,302 580.8,297 573.3,290.7 565.7,284.4 558.1,276.8 550.5,271.7 537.9,266.7 525.3,262.9 515.2,259.1 505.1,260.4" fill="#f2efe9" /><polygon points="505.1,175.6 512.6,171.8 518.3,169.5 537.9,164.2 554.9,160.5 559.4,159.8 554.9,163.6 550.5,170.6 537.9,180.7 518.3,190.8 505.1,190.8" fill="#bfdab3" /><polygon points="604.8,225 617.5,225 620,232.6 613.7,243.9 607.4,240.2 606.1,232.6" fill="#cfe2c4" /><polygon points="608.6,262.9 621.3,261.6 626.3,267.9 636.4,266.7 642.7,271.7 633.9,274.3 618.7,273 609.9,269.2" fill="#d3e4c9" /><polygon points="649,232.6 657.9,231.3 668,236.4 679.4,241.4 676.8,249 673,255.3 664.2,262.9 660.4,261.6 656.6,254.1 651.6,246.5 647.8,237.6" fill="#bfdab3" /><polygon points="670.5,273 679.4,269.2 686.9,262.9 697,259.1 704.6,262.9 708.4,270.5 712.2,275.5 709.7,281.8 704.6,284.4 697,283.1 689.5,280.6 681.9,281.8 676.8,280.6 671.8,278.1" fill="#d4e4ca" /><polygon points="712.2,283.1 714.7,278.1 722.3,275.5 731.1,279.3 733.7,285.6 729.9,291.9 723.6,295.1 717.3,290.7" fill="#bfdab3" /><polygon points="598.5,300.8 604.8,302 613.7,305.8 621.3,307.7 618.7,313.4 613.7,314 607.4,312.2 602.3,305.8" fill="#f2efe9" /><polygon points="592.2,291.9 594.7,291.3 596,295.1 593.5,295.7" fill="#f2efe9" /><polygon points="737.5,288.9 738.8,282.6 745.1,280.1 750.2,283.9 755.2,280.7 764.1,282.6 772.9,277.6 779.2,275.1 780.5,280.1 776.7,286.4 783,288.9 788.1,285.2 790.6,280.1 803.2,279.5 810.8,283.9 817.1,281.4 823.4,277.6 832.3,276.3 833.5,282.6 836,286.4 839.8,283.9 843.6,291.5 846.2,295.3 851.2,286.4 856.3,281.4 866.4,276.3 872.7,278.8 871.4,286.4 863.8,291.5 873.9,290.2 880.3,295.3 879,302.8 881.5,311.7 884,307.9 889.1,297.8 894.2,288.9 897.9,290.2 895.4,299.1 891.6,305.4 901.7,302.8 904.9,304.1 903,309.2 896.7,318 890.4,324.3 886.6,333.2 879,343.3 871.4,340.7 873.9,335.7 884,324.3 887.8,319.3 880.3,320.5 868.9,329.4 866.4,339.5 862.6,335.7 856.3,338.2 848.7,331.9 841.1,329.4 834.8,324.3 825.9,320.5 815.8,316.7 810.8,311.7 800.7,307.9 790.6,305.4 783,305.4 772.9,300.3 762.8,299.1 752.7,295.3 742.6,294" fill="#bfdab3" /><polygon points="790.6,281.4 803.2,280.7 801.9,287.7 793.1,288.9" fill="#e4ebd9" /><polygon points="803.8,286.4 812,282.6 815.8,291.5 808.3,294.6" fill="#e4ebd9" /><polygon points="837.3,320.5 861.3,311.7 862.6,323.1 856.3,329.4 842.4,328.1" fill="#d3e8c0" /><polygon points="880.3,348.3 884,344.5 892.3,342.6 890.4,348.3 885.3,353.4 880.9,354.6" fill="#bfdab3" /><polygon points="763.4,319.3 765.9,319.9 766.6,325.6 764.3,326.2" fill="#cfe2c4" /><polygon points="547.5,330 582.5,330 580,345 575,357.5 560,355 550,345" fill="#d4e5ca" /><polygon points="563.8,362.5 582.5,365 580,392.5 567.5,390" fill="#d4e5ca" /><polygon points="542.5,410 562.5,405 567.5,415 550,421.2" fill="#c9dfbe" /><polygon points="625,452.5 640,450 655,465 670,460 685,462.5 696.2,470 695,480 675,482.5 660,480 642.5,482.5 625,472.5" fill="#c6ddbb" /><polygon points="718.8,446.2 726.2,447.5 726.2,455 718.8,454.5" fill="#c6ddbb" /><polygon points="690,485 700,483.8 700,492.5 691.2,493.8" fill="#c6ddbb" /><polygon points="1749.5,431.2 1754.5,428.8 1753.5,442.5 1749.2,445.5" fill="#f2efe9" /><polygon points="792.5,868 797.5,867.5 797.5,875 793,875.5" fill="#f2efe9" /><polygon points="925,885 935,877 950,873 975,868 975,885" fill="#f2efe9" /></g>
<g><polygon points="631.4,243.9 637.7,238.9 645.3,237.6 647.8,241.4 650.3,247.7 645.3,250.3 638.9,246.5 633.9,249" fill="#aad3df" /><polygon points="863.8,308.5 875.2,307.9 876.5,312.9 866.4,314.2" fill="#aad3df" /><polygon points="836,293.4 843.6,292.1 846.2,297.2 838.6,298.4" fill="#aad3df" /><polygon points="837.3,307.9 843.6,307.9 843.6,312.3 837.9,312.3" fill="#aad3df" /><polygon points="530,373.8 537.5,372.5 553.8,383.8 551.2,386.2 540,380 532.5,378.8" fill="#aad3df" /><polygon points="520,403.8 525,407.5 528.8,425 525,442.5 521.2,445 523.8,430 521.2,415" fill="#aad3df" /><polygon points="602.5,337.5 608.8,336.2 610,343.8 605,346.2" fill="#aad3df" /><polygon points="625,346.2 630,345 636.2,355 631.2,357" fill="#aad3df" /><polygon points="577.5,491.2 585,490 587,501.2 579.5,502.5" fill="#aad3df" /><polygon points="578,506.2 590,505 593,517.5 582.5,520.5 577.5,515" fill="#aad3df" /><polygon points="698.8,440 703.8,441.2 707,452.5 702.5,454.5" fill="#aad3df" /><polygon points="585,342.5 588,342 591.2,355 588,355.5" fill="#aad3df" /></g>
<g><polyline points="542.9,125.1 569.5,142.1 579.6,179.4 599.8,202.1 613.7,200.8 626.3,195.8 633.9,193.5 645.3,197 646.5,208.4 644,221 646.5,231.2" fill="none" stroke="#b39bc0" stroke-width="1.6" stroke-linejoin="round" stroke-linecap="round" opacity="0.85"/><polyline points="645.3,225 646.5,237.6 650.3,247.7 656.6,255.3 660.4,262.9 664.2,265.4 675.6,255.9 681.9,258.5 693.3,255.3 702.1,258.5 716,273.6 699.6,300.2" fill="none" stroke="#b39bc0" stroke-width="1.6" stroke-linejoin="round" stroke-linecap="round" opacity="0.85"/><polyline points="699.6,300.2 735,321.8 809.5,370.4 811.4,381.2 823.4,459.5" fill="none" stroke="#b39bc0" stroke-width="1.6" stroke-linejoin="round" stroke-linecap="round" opacity="0.85"/><polyline points="743.8,330 809.5,370 838.8,550" fill="none" stroke="#b39bc0" stroke-width="1.6" stroke-linejoin="round" stroke-linecap="round" opacity="0.85"/><polyline points="1617.5,418 1900,417.5" fill="none" stroke="#b39bc0" stroke-width="2.4" stroke-linejoin="round" stroke-linecap="round" opacity="0.85"/><polyline points="1605,416.2 1585,420.5 1565,428 1545,440.5 1525,460.5 1507.5,479.2 1490,498 1470,514.2 1450,528 1432.5,543 1422.5,550" fill="none" stroke="#b39bc0" stroke-width="1.6" stroke-linejoin="round" stroke-linecap="round" opacity="0.85"/><polyline points="836.2,540 850,620 822.5,700 817.5,715 813.8,730 810,747.5 807.5,760" fill="none" stroke="#b39bc0" stroke-width="1.6" stroke-linejoin="round" stroke-linecap="round" opacity="0.85"/><polyline points="1172.5,680 1165,676.2 1150,640 1197.5,614.5 1395,614.5 1430,545 1450,537.5" fill="none" stroke="#b39bc0" stroke-width="1.6" stroke-linejoin="round" stroke-linecap="round" opacity="0.85"/><polyline points="1172.5,680 1172.5,690 1175,702.5 1180,718.8 1175,727.5 1112.5,760" fill="none" stroke="#b39bc0" stroke-width="1.6" stroke-linejoin="round" stroke-linecap="round" opacity="0.85"/><polyline points="1737.5,622.5 1750,615 1755,622.5 1756.2,715 1752.5,730 1747.5,760" fill="none" stroke="#b39bc0" stroke-width="1" stroke-linejoin="round" stroke-linecap="round" opacity="0.85"/><polyline points="1752.5,738.8 1900,743" fill="none" stroke="#b39bc0" stroke-width="1" stroke-linejoin="round" stroke-linecap="round" opacity="0.85"/><polyline points="1880,540 1875,555 1867.5,577.5 1857.5,602.5 1847.5,615 1842.5,640 1840,670 1835,695 1827.5,720 1835,740" fill="none" stroke="#b39bc0" stroke-width="1" stroke-linejoin="round" stroke-linecap="round" opacity="0.85"/><polyline points="807.5,760 800,765 782.5,785 772.5,795 750,807.5 746.2,820 747.5,835 752.5,860 782.5,881.2" fill="none" stroke="#b39bc0" stroke-width="1.6" stroke-linejoin="round" stroke-linecap="round" opacity="0.85"/><polyline points="832.5,881.2 975,805" fill="none" stroke="#b39bc0" stroke-width="1.6" stroke-linejoin="round" stroke-linecap="round" opacity="0.85"/><polyline points="717.5,875 750,845" fill="none" stroke="#b39bc0" stroke-width="1" stroke-linejoin="round" stroke-linecap="round" opacity="0.85"/><polyline points="506.2,874.5 575,874.5 575,881.2" fill="none" stroke="#b39bc0" stroke-width="1" stroke-linejoin="round" stroke-linecap="round" opacity="0.85"/><polyline points="1175,720 1175,726.2 1057.5,787.5 975,805" fill="none" stroke="#b39bc0" stroke-width="1.6" stroke-linejoin="round" stroke-linecap="round" opacity="0.85"/><polyline points="1090.5,772.5 1090.5,841.8 1450,841.2" fill="none" stroke="#b39bc0" stroke-width="1" stroke-linejoin="round" stroke-linecap="round" opacity="0.85"/><polyline points="1013.8,798.8 1013.8,881.2" fill="none" stroke="#b39bc0" stroke-width="1" stroke-linejoin="round" stroke-linecap="round" opacity="0.85"/><polyline points="1425,841.8 1535,841.2" fill="none" stroke="#b39bc0" stroke-width="1" stroke-linejoin="round" stroke-linecap="round" opacity="0.85"/><polyline points="1535,841.2 1547.5,850 1555,860 1567.5,865 1570,881.2" fill="none" stroke="#b39bc0" stroke-width="1" stroke-linejoin="round" stroke-linecap="round" opacity="0.85"/><polyline points="1756.2,715 1752.5,742.5 1740,785 1731.2,832.5 1730,881.2" fill="none" stroke="#b39bc0" stroke-width="1" stroke-linejoin="round" stroke-linecap="round" opacity="0.85"/><polyline points="1731.2,834.5 1800,836.2 1802.5,840 1807.5,836.2 1900,837.5" fill="none" stroke="#b39bc0" stroke-width="1" stroke-linejoin="round" stroke-linecap="round" opacity="0.85"/></g>
<g><polyline points="577,126.1 583.4,130.7 599.8,132.6 611.2,135.2 621.3,142.7 617.5,151.6 621.3,159.2 623.8,173.1 627.6,180.6 627.6,185.7 626.3,190.7" fill="none" stroke="#f3a9a6" stroke-width="1.298" stroke-linejoin="round" stroke-linecap="round" /><polyline points="633.9,192.6 641.5,191.4 652.8,198.3 654.1,208.4 651.6,219.8 655.4,223.6 668,223.6 676.8,228.6 689.5,232.4" fill="none" stroke="#f3a9a6" stroke-width="1.298" stroke-linejoin="round" stroke-linecap="round" /><polyline points="618.7,208.4 613.7,221 608.6,231.2" fill="none" stroke="#e98a9d" stroke-width="1.534" stroke-linejoin="round" stroke-linecap="round" /><polyline points="613.7,225 604.8,233.8 601,240.2 600.4,251.5 593.5,256.6 587.2,267.9 582.1,276.8 580.8,284.4 584,295.7 583.4,313.4 585.9,318.5 593.5,324.2 594.1,336.2" fill="none" stroke="#e98a9d" stroke-width="1.77" stroke-linejoin="round" stroke-linecap="round" /><polyline points="735,232.8 745.1,239.2 757.7,244.8 776.7,246.7 791.8,243.6 810.8,242.3 823.4,243.6 828.5,245.5 836,243.6 853.7,242.9 866.4,239.2 880.3,232.2 892.9,229.1 906.8,224 924.5,218.9 932,214.5 939.6,213.9 952.3,210.1 966.1,207.6" fill="none" stroke="#f3a9a6" stroke-width="1.298" stroke-linejoin="round" stroke-linecap="round" /><polyline points="975,202.5 997.5,196.2 1020,205 1060,213.8 1090,220 1117.5,221.2 1135,230 1155,233.8 1175,232.5 1200,227.5 1225,231.2 1240,237.5 1262.5,237.5 1287.5,247.5 1307.5,247.5 1325,267.5 1340,285 1355,302.5 1375,317.5 1397.5,340" fill="none" stroke="#f3a9a6" stroke-width="1.298" stroke-linejoin="round" stroke-linecap="round" /><polyline points="1121.2,225 1118.8,200 1095,175 1086.2,157.5 1091.2,135 1085,126.2" fill="none" stroke="#f3a9a6" stroke-width="1.298" stroke-linejoin="round" stroke-linecap="round" /><polyline points="1125,230 1131.2,255 1132.5,270 1127.5,295 1125,320 1135,340" fill="none" stroke="#e98a9d" stroke-width="1.652" stroke-linejoin="round" stroke-linecap="round" /><polyline points="976.2,205 985,230 1002.5,265 1012.5,295 1025,325 1032.5,340" fill="none" stroke="#e98a9d" stroke-width="1.652" stroke-linejoin="round" stroke-linecap="round" /><polyline points="1425,126.2 1437.5,142.5 1450,150" fill="none" stroke="#f3a9a6" stroke-width="1.298" stroke-linejoin="round" stroke-linecap="round" /><polyline points="1425,127.5 1450,155 1487.5,186.2 1525,192.5 1555,195 1577.5,200 1597.5,220 1607.5,245 1622.5,256.2 1642.5,260 1662.5,280 1667.5,292.5 1677.5,306.2 1695,327.5 1705,340" fill="none" stroke="#f3a9a6" stroke-width="1.298" stroke-linejoin="round" stroke-linecap="round" /><polyline points="1690,340 1720,315 1747.5,282.5 1762.5,260 1785,240 1815,220 1827.5,215 1850,202.5 1875,187.5 1895,170" fill="none" stroke="#e98a9d" stroke-width="1.416" stroke-linejoin="round" stroke-linecap="round" /><polyline points="1806.2,195 1802.5,202.5 1815,215 1827.5,223.8" fill="none" stroke="#e98a9d" stroke-width="1.416" stroke-linejoin="round" stroke-linecap="round" /><polyline points="1700,340 1750,335 1787.5,327.5 1832.5,290 1865,255 1895,220" fill="none" stroke="#e98a9d" stroke-width="1.416" stroke-linejoin="round" stroke-linecap="round" /><polyline points="1827.5,225 1850,250 1872.5,270" fill="none" stroke="#f3a9a6" stroke-width="1.298" stroke-linejoin="round" stroke-linecap="round" /><polyline points="1742.5,337.5 1747.5,300 1767.5,270" fill="none" stroke="#f3a9a6" stroke-width="1.298" stroke-linejoin="round" stroke-linecap="round" /><polyline points="1530,340 1540,330 1575,323.8 1615,322.5 1650,325 1675,327.5 1692.5,320" fill="none" stroke="#f3a9a6" stroke-width="1.298" stroke-linejoin="round" stroke-linecap="round" /><polyline points="1712.5,290 1717.5,300 1722.5,310 1720,320" fill="none" stroke="#f3a9a6" stroke-width="1.298" stroke-linejoin="round" stroke-linecap="round" /><polyline points="594.5,330 596.2,362.5 598.8,383.8 588.8,400 587.5,425 585,455 585,480 595,500 605,517.5 625,521.2 635,527.5 647.5,550" fill="none" stroke="#e98a9d" stroke-width="1.77" stroke-linejoin="round" stroke-linecap="round" /><polyline points="585,481.2 577.5,492.5 576.2,520 576.2,550" fill="none" stroke="#e98a9d" stroke-width="1.77" stroke-linejoin="round" stroke-linecap="round" /><polyline points="515,487.5 516.2,505 517.5,527.5 507.5,550" fill="none" stroke="#e98a9d" stroke-width="1.77" stroke-linejoin="round" stroke-linecap="round" /><polyline points="1026.2,330 1047.5,350 1065,365 1080,377.5 1087.5,395 1090,422.5 1095,445 1100,460 1105,470 1097.5,482.5 1097.5,505 1100,525 1102.5,550" fill="none" stroke="#e98a9d" stroke-width="1.652" stroke-linejoin="round" stroke-linecap="round" /><polyline points="1126.2,330 1140,345 1146.2,365 1137.5,387.5 1138.8,410 1131.2,432.5 1135,445 1130,465 1125,475 1117.5,490 1102.5,502.5" fill="none" stroke="#e98a9d" stroke-width="1.534" stroke-linejoin="round" stroke-linecap="round" /><polyline points="1126.2,476.2 1147.5,477.5 1155,500 1161.2,520 1190,513.8 1200,517.5 1225,518.8 1237.5,517.5" fill="none" stroke="#f3a9a6" stroke-width="1.298" stroke-linejoin="round" stroke-linecap="round" /><polyline points="1237.5,517.5 1262.5,510 1285,500 1325,487.5 1350,477.5 1375,460 1400,447.5 1425,440 1450,430" fill="none" stroke="#f3a9a6" stroke-width="1.298" stroke-linejoin="round" stroke-linecap="round" /><polyline points="1297.5,550 1320,537.5 1350,530 1387.5,525 1415,522.5 1450,515" fill="none" stroke="#e98a9d" stroke-width="1.534" stroke-linejoin="round" stroke-linecap="round" /><polyline points="1237.5,520 1225,532.5 1212.5,545 1207.5,550" fill="none" stroke="#e98a9d" stroke-width="1.416" stroke-linejoin="round" stroke-linecap="round" /><polyline points="1390,330 1405,342.5 1420,353.8 1440,356.2 1450,362.5" fill="none" stroke="#f3a9a6" stroke-width="1.298" stroke-linejoin="round" stroke-linecap="round" /><polyline points="1425,530 1445,520 1475,500 1507.5,477.5 1527.5,455 1547.5,437.5 1570,422.5 1600,412.5 1625,400 1650,387.5 1675,372.5 1700,357.5 1720,347.5" fill="none" stroke="#e98a9d" stroke-width="1.534" stroke-linejoin="round" stroke-linecap="round" /><polyline points="1507.5,358.8 1530,367.5 1555,372.5 1585,367.5 1610,352.5 1627.5,337.5 1640,340 1660,360 1675,370" fill="none" stroke="#e98a9d" stroke-width="1.534" stroke-linejoin="round" stroke-linecap="round" /><polyline points="1497.5,370 1510,405 1520,435 1527.5,455" fill="none" stroke="#e98a9d" stroke-width="1.416" stroke-linejoin="round" stroke-linecap="round" /><polyline points="1507.5,358.8 1475,380 1450,402.5 1425,412.5" fill="none" stroke="#e98a9d" stroke-width="1.416" stroke-linejoin="round" stroke-linecap="round" /><polyline points="1507.5,358.8 1487.5,352.5 1450,360 1425,355" fill="none" stroke="#e98a9d" stroke-width="1.416" stroke-linejoin="round" stroke-linecap="round" /><polyline points="1727.5,365 1735,392.5 1735,417.5 1736.2,462.5 1730,505 1727.5,550" fill="none" stroke="#e98a9d" stroke-width="1.534" stroke-linejoin="round" stroke-linecap="round" /><polyline points="1727.5,365 1755,375 1800,377.5 1850,376.2 1890,357.5" fill="none" stroke="#e98a9d" stroke-width="1.534" stroke-linejoin="round" stroke-linecap="round" /><polyline points="1760,495 1787.5,507.5 1825,525 1827.5,550" fill="none" stroke="#e98a9d" stroke-width="1.534" stroke-linejoin="round" stroke-linecap="round" /><polyline points="1872.5,550 1882.5,500 1865,455 1865,430 1877.5,392.5 1872.5,367.5" fill="none" stroke="#e98a9d" stroke-width="1.534" stroke-linejoin="round" stroke-linecap="round" /><polyline points="1547.5,485 1580,457.5 1600,450 1650,435 1675,427.5 1695,433.8 1732.5,422.5" fill="none" stroke="#f5c0a8" stroke-width="1.18" stroke-linejoin="round" stroke-linecap="round" /><polyline points="1760,495 1772.5,455 1770,417.5 1757.5,375" fill="none" stroke="#e98a9d" stroke-width="1.416" stroke-linejoin="round" stroke-linecap="round" /><polyline points="1720,347.5 1700,330" fill="none" stroke="#e98a9d" stroke-width="1.534" stroke-linejoin="round" stroke-linecap="round" /><polyline points="1720,347.5 1740,335 1750,325" fill="none" stroke="#e98a9d" stroke-width="1.534" stroke-linejoin="round" stroke-linecap="round" /><polyline points="1690,362.5 1705,345 1720,330" fill="none" stroke="#e98a9d" stroke-width="1.534" stroke-linejoin="round" stroke-linecap="round" /><polyline points="1700,357.5 1725,367.5 1750,360" fill="none" stroke="#e98a9d" stroke-width="1.534" stroke-linejoin="round" stroke-linecap="round" /><polyline points="1712.5,330 1720,347.5 1727.5,365" fill="none" stroke="#e98a9d" stroke-width="1.534" stroke-linejoin="round" stroke-linecap="round" /><polyline points="642.5,540 655,565 657.5,602.5 665,620 663.8,637.5 672.5,652.5 682.5,670 683.8,690 685,715 686.2,740 687.5,760" fill="none" stroke="#e98a9d" stroke-width="1.652" stroke-linejoin="round" stroke-linecap="round" /><polyline points="576.2,540 578.8,577.5 581.2,590 582.5,615 590,630 595,652.5 600,670 600,695 605,715 606.2,745 607.5,760" fill="none" stroke="#e98a9d" stroke-width="1.652" stroke-linejoin="round" stroke-linecap="round" /><polyline points="563.8,581.2 577.5,578.8" fill="none" stroke="#e98a9d" stroke-width="1.416" stroke-linejoin="round" stroke-linecap="round" /><polyline points="580,587.5 605,600 635,612.5 642.5,618.8 665,619.5" fill="none" stroke="#e98a9d" stroke-width="1.534" stroke-linejoin="round" stroke-linecap="round" /><polyline points="506.2,718.8 560,721.2 577.5,732.5 595,737.5 620,732.5 640,722.5 660,710 685,706.2 690,701.2 720,698.8 750,703.8 800,705 820,706.2 875,703.8 905,703.8 915,712.5 937.5,715" fill="none" stroke="#e98a9d" stroke-width="1.534" stroke-linejoin="round" stroke-linecap="round" /><polyline points="590,747.5 607.5,747.5 640,750 660,757.5 675,765" fill="none" stroke="#e98a9d" stroke-width="1.534" stroke-linejoin="round" stroke-linecap="round" /><polyline points="685,715 700,722.5 707.5,740 725,742.5 735,760" fill="none" stroke="#e98a9d" stroke-width="1.534" stroke-linejoin="round" stroke-linecap="round" /><polyline points="810,712.5 795,730 780,747.5 765,760" fill="none" stroke="#e98a9d" stroke-width="1.534" stroke-linejoin="round" stroke-linecap="round" /><polyline points="575,760 590,747.5 601.2,740 607.5,747.5 610,760" fill="none" stroke="#e98a9d" stroke-width="1.534" stroke-linejoin="round" stroke-linecap="round" /><polyline points="758.8,727.5 757.5,755" fill="none" stroke="#f5b8a0" stroke-width="1.18" stroke-linejoin="round" stroke-linecap="round" /><polyline points="936.2,726.2 920,740 900,755 892.5,760" fill="none" stroke="#e98a9d" stroke-width="1.534" stroke-linejoin="round" stroke-linecap="round" /><polyline points="945,710 975,700" fill="none" stroke="#e98a9d" stroke-width="1.534" stroke-linejoin="round" stroke-linecap="round" /><polyline points="506.2,547.5 506.5,590 506.2,640" fill="none" stroke="#e98a9d" stroke-width="1.416" stroke-linejoin="round" stroke-linecap="round" /><polyline points="735,752.5 750,755 775,754.5 775,760" fill="none" stroke="#e98a9d" stroke-width="1.416" stroke-linejoin="round" stroke-linecap="round" /><polyline points="643.8,618.8 643.8,627.5" fill="none" stroke="#e98a9d" stroke-width="1.416" stroke-linejoin="round" stroke-linecap="round" /><polyline points="656.2,570 661.2,570" fill="none" stroke="#e98a9d" stroke-width="1.416" stroke-linejoin="round" stroke-linecap="round" /><polyline points="1187.5,712.5 1212.5,707.5 1250,700 1287.5,696.2 1307.5,695 1337.5,702.5 1362.5,707.5 1387.5,707.5 1412.5,697.5 1437.5,687.5 1450,685" fill="none" stroke="#e98a9d" stroke-width="1.534" stroke-linejoin="round" stroke-linecap="round" /><polyline points="1277.5,690 1300,682.5 1317.5,683.8 1330,702.5" fill="none" stroke="#e98a9d" stroke-width="1.416" stroke-linejoin="round" stroke-linecap="round" /><polyline points="1310,681.2 1307.5,695 1300,715 1290,735 1295,760" fill="none" stroke="#e98a9d" stroke-width="1.416" stroke-linejoin="round" stroke-linecap="round" /><polyline points="1180,718.8 1187.5,730 1192.5,760" fill="none" stroke="#e98a9d" stroke-width="1.534" stroke-linejoin="round" stroke-linecap="round" /><polyline points="1187.5,730 1207.5,735 1211.2,742.5" fill="none" stroke="#e98a9d" stroke-width="1.416" stroke-linejoin="round" stroke-linecap="round" /><polyline points="1172.5,702.5 1192.5,700 1195,695" fill="none" stroke="#e98a9d" stroke-width="1.416" stroke-linejoin="round" stroke-linecap="round" /><polyline points="1080,670 1110,675 1145,680 1170,690 1175,702.5 1180,718.8" fill="none" stroke="#e98a9d" stroke-width="1.534" stroke-linejoin="round" stroke-linecap="round" /><polyline points="975,700 990,685 1007.5,672.5 1025,657.5 1050,640 1087.5,622.5 1125,602.5 1165,582.5 1207.5,562.5 1225,566.2 1257.5,560 1287.5,555 1315,548.8 1337.5,542.5 1350,537.5" fill="none" stroke="#e98a9d" stroke-width="1.534" stroke-linejoin="round" stroke-linecap="round" /><polyline points="1208.8,540 1208.8,552.5 1200,562.5" fill="none" stroke="#e98a9d" stroke-width="1.416" stroke-linejoin="round" stroke-linecap="round" /><polyline points="990,683.8 1037.5,682.5 1057.5,672.5 1080,670" fill="none" stroke="#e98a9d" stroke-width="1.534" stroke-linejoin="round" stroke-linecap="round" /><polyline points="1015,640 1000,652.5 988.8,684.5" fill="none" stroke="#e98a9d" stroke-width="1.298" stroke-linejoin="round" stroke-linecap="round" /><polyline points="1425,637.5 1437.5,672.5 1445,690" fill="none" stroke="#e98a9d" stroke-width="1.416" stroke-linejoin="round" stroke-linecap="round" /><polyline points="1427.5,645 1435,670" fill="none" stroke="#f5b8a0" stroke-width="1.18" stroke-linejoin="round" stroke-linecap="round" /><polyline points="1335,700 1342.5,715" fill="none" stroke="#f5b8a0" stroke-width="1.18" stroke-linejoin="round" stroke-linecap="round" /><polyline points="1337.5,671.2 1355,670" fill="none" stroke="#f5b8a0" stroke-width="1.18" stroke-linejoin="round" stroke-linecap="round" /><polyline points="1247.5,651.2 1275,653.8 1297.5,660 1310,681.2" fill="none" stroke="#e98a9d" stroke-width="1.298" stroke-linejoin="round" stroke-linecap="round" /><polyline points="1485,540 1482.5,555 1472.5,582.5 1466.2,610 1462.5,645 1462.5,680 1461.2,700 1465,725 1457.5,747.5 1456.2,760" fill="none" stroke="#e98a9d" stroke-width="1.534" stroke-linejoin="round" stroke-linecap="round" /><polyline points="1425,692.5 1450,690 1461.2,690 1487.5,688.8 1520,683.8 1542.5,685 1555,690 1575,700 1605,703.8 1615,712.5 1625,717.5 1640,710 1660,712.5 1677.5,725 1690,735 1702.5,750" fill="none" stroke="#e98a9d" stroke-width="1.534" stroke-linejoin="round" stroke-linecap="round" /><polyline points="1542.5,685 1532.5,676.2 1520,682.5" fill="none" stroke="#f5b8a0" stroke-width="1.18" stroke-linejoin="round" stroke-linecap="round" /><polyline points="1555,647.5 1560,675" fill="none" stroke="#f5b8a0" stroke-width="1.18" stroke-linejoin="round" stroke-linecap="round" /><polyline points="1547.5,690 1552.5,710" fill="none" stroke="#e98a9d" stroke-width="1.298" stroke-linejoin="round" stroke-linecap="round" /><polyline points="1435,660 1450,675 1461.2,687.5" fill="none" stroke="#e98a9d" stroke-width="1.416" stroke-linejoin="round" stroke-linecap="round" /><polyline points="1427.5,643.8 1430,651.2" fill="none" stroke="#f5b8a0" stroke-width="1.18" stroke-linejoin="round" stroke-linecap="round" /><polyline points="1722.5,540 1717.5,550 1705,567.5 1697.5,600 1707.5,625 1712.5,660 1705,690 1700,715 1702.5,740 1705,752.5" fill="none" stroke="#e98a9d" stroke-width="1.534" stroke-linejoin="round" stroke-linecap="round" /><polyline points="1610,760 1637.5,747.5 1675,735 1690,735" fill="none" stroke="#e98a9d" stroke-width="1.534" stroke-linejoin="round" stroke-linecap="round" /><polyline points="1752.5,620 1767.5,615 1785,622.5 1785,635" fill="none" stroke="#e98a9d" stroke-width="1.298" stroke-linejoin="round" stroke-linecap="round" /><polyline points="1760,715 1770,690 1781.2,672.5" fill="none" stroke="#e98a9d" stroke-width="1.298" stroke-linejoin="round" stroke-linecap="round" /><polyline points="1875,540 1865,577.5 1850,612.5 1842.5,640 1840,670 1835,700 1827.5,725 1825,760" fill="none" stroke="#e98a9d" stroke-width="1.534" stroke-linejoin="round" stroke-linecap="round" /><polyline points="1822.5,540 1821.2,577.5 1837.5,595 1850,612.5" fill="none" stroke="#e98a9d" stroke-width="1.534" stroke-linejoin="round" stroke-linecap="round" /><polyline points="1857.5,612.5 1870,627.5 1882.5,645 1895,657.5" fill="none" stroke="#e98a9d" stroke-width="1.416" stroke-linejoin="round" stroke-linecap="round" /><polyline points="1490,552.5 1502.5,542.5" fill="none" stroke="#f5b8a0" stroke-width="1.18" stroke-linejoin="round" stroke-linecap="round" /><polyline points="506.2,803.8 537.5,805 557.5,801.2 612.5,803.8 655,800 685,803.8 715,810 735,807.5 755,796.2 767.5,772.5 775,760 782.5,745 810,717.5" fill="none" stroke="#e98a9d" stroke-width="1.534" stroke-linejoin="round" stroke-linecap="round" /><polyline points="601.2,741.2 607.5,747.5 640,752.5 675,765 690,770 715,773.8 740,780 755,796.2" fill="none" stroke="#e98a9d" stroke-width="1.534" stroke-linejoin="round" stroke-linecap="round" /><polyline points="689.2,701.2 685,722.5 683.8,760 690,770 712.5,777.5 735,785 755,796.2 746.2,820 735,835 725,852.5 715,875 712.5,881.2" fill="none" stroke="#e98a9d" stroke-width="1.534" stroke-linejoin="round" stroke-linecap="round" /><polyline points="683.8,770 686.2,803.8 690,822.5 692.5,860 691.2,881.2" fill="none" stroke="#e98a9d" stroke-width="1.534" stroke-linejoin="round" stroke-linecap="round" /><polyline points="717.5,773.8 716.2,795 721.2,810 725,835" fill="none" stroke="#e98a9d" stroke-width="1.416" stroke-linejoin="round" stroke-linecap="round" /><polyline points="601.2,741.2 610,760 613.8,785 613.8,805" fill="none" stroke="#e98a9d" stroke-width="1.416" stroke-linejoin="round" stroke-linecap="round" /><polyline points="590,742.5 575,760 560,780 556.2,805 557.5,835 558.8,881.2" fill="none" stroke="#e98a9d" stroke-width="1.534" stroke-linejoin="round" stroke-linecap="round" /><polyline points="755,807.5 787.5,810 812.5,807.5 850,790 862.5,782.5 887.5,765 912.5,750 930,735 940,722.5" fill="none" stroke="#e98a9d" stroke-width="1.534" stroke-linejoin="round" stroke-linecap="round" /><polyline points="735,752.5 750,756.2 775,755" fill="none" stroke="#f5b8a0" stroke-width="1.18" stroke-linejoin="round" stroke-linecap="round" /><polyline points="758.8,727.5 757.5,757.5" fill="none" stroke="#f5b8a0" stroke-width="1.18" stroke-linejoin="round" stroke-linecap="round" /><polyline points="620,805 620,830 650,850 675,862.5 692.5,867.5" fill="none" stroke="#e98a9d" stroke-width="1.298" stroke-linejoin="round" stroke-linecap="round" /><polyline points="780,820 790,832.5 800,832.5" fill="none" stroke="#f5b8a0" stroke-width="1.18" stroke-linejoin="round" stroke-linecap="round" /><polyline points="590,817.5 607.5,810" fill="none" stroke="#f5b8a0" stroke-width="1.18" stroke-linejoin="round" stroke-linecap="round" /><polyline points="592.5,770 595,752.5" fill="none" stroke="#f5b8a0" stroke-width="1.18" stroke-linejoin="round" stroke-linecap="round" /><polyline points="715,773.8 715,810" fill="none" stroke="#e98a9d" stroke-width="1.298" stroke-linejoin="round" stroke-linecap="round" /><polyline points="735,752.5 742.5,760 745,770 755,775" fill="none" stroke="#e98a9d" stroke-width="1.298" stroke-linejoin="round" stroke-linecap="round" /><polyline points="506.2,720 525,722.5 560,721.2" fill="none" stroke="#e98a9d" stroke-width="1.416" stroke-linejoin="round" stroke-linecap="round" /><polyline points="1183.8,732.5 1165,755 1135,777.5 1110,797.5 1085,817.5 1057.5,832.5 1037.5,842.5 1007.5,852.5 987.5,860 975,870 965,875" fill="none" stroke="#e98a9d" stroke-width="1.534" stroke-linejoin="round" stroke-linecap="round" /><polyline points="1080,821.2 1090,823.8 1115,820 1130,820 1140,825 1165,820 1182.5,827.5 1192.5,822.5 1202.5,822.5 1205,830 1225,827.5 1230,820 1240,812.5 1255,810 1267.5,800 1287.5,797.5 1302.5,790 1330,790 1350,802.5 1360,820 1370,825 1392.5,820 1397.5,832.5 1415,841.2 1435,840 1450,832.5" fill="none" stroke="#e98a9d" stroke-width="1.534" stroke-linejoin="round" stroke-linecap="round" /><polyline points="1190,732.5 1192.5,745 1198.8,765 1200,780" fill="none" stroke="#e98a9d" stroke-width="1.416" stroke-linejoin="round" stroke-linecap="round" /><polyline points="1200,780 1203.8,800 1202.5,820 1206.2,835 1205,860 1197.5,881.2" fill="none" stroke="#f5b8a0" stroke-width="1.18" stroke-linejoin="round" stroke-linecap="round" /><polyline points="1057.5,823.8 1052.5,835 1047.5,855 1047.5,881.2" fill="none" stroke="#e98a9d" stroke-width="1.534" stroke-linejoin="round" stroke-linecap="round" /><polyline points="1307.5,682.5 1305,697.5 1297.5,722.5 1287.5,737.5 1292.5,755 1305,767.5 1317.5,770 1330,787.5 1350,802.5" fill="none" stroke="#e98a9d" stroke-width="1.534" stroke-linejoin="round" stroke-linecap="round" /><polyline points="1360,820 1357.5,840 1361.2,860 1363.8,881.2" fill="none" stroke="#e98a9d" stroke-width="1.534" stroke-linejoin="round" stroke-linecap="round" /><polyline points="1415,841.2 1422.5,860 1430,881.2" fill="none" stroke="#e98a9d" stroke-width="1.416" stroke-linejoin="round" stroke-linecap="round" /><polyline points="987.5,857.5 990,872.5 995,881.2" fill="none" stroke="#e98a9d" stroke-width="1.416" stroke-linejoin="round" stroke-linecap="round" /><polyline points="1135,862.5 1152.5,863.8" fill="none" stroke="#e98a9d" stroke-width="1.298" stroke-linejoin="round" stroke-linecap="round" /><polyline points="1302.5,790 1305,797.5 1310,802.5" fill="none" stroke="#f5b8a0" stroke-width="1.18" stroke-linejoin="round" stroke-linecap="round" /><polyline points="1392.5,820 1390,832.5 1382.5,838.8" fill="none" stroke="#f5b8a0" stroke-width="1.18" stroke-linejoin="round" stroke-linecap="round" /><polyline points="1483.8,827.5 1505,820 1530,805 1550,790 1575,775 1600,760 1610,760" fill="none" stroke="#e98a9d" stroke-width="1.534" stroke-linejoin="round" stroke-linecap="round" /><polyline points="1456.2,760 1465,772.5 1475,790 1483.8,810 1485,827.5" fill="none" stroke="#e98a9d" stroke-width="1.534" stroke-linejoin="round" stroke-linecap="round" /><polyline points="1500,835 1505,860 1507.5,881.2" fill="none" stroke="#e98a9d" stroke-width="1.534" stroke-linejoin="round" stroke-linecap="round" /><polyline points="1425,840 1437.5,832.5 1450,828.8 1475,826.2 1483.8,827.5 1500,832.5 1520,832.5 1535,835 1545,847.5 1562.5,842.5 1580,847.5 1595,857.5 1603.8,870 1605,881.2" fill="none" stroke="#e98a9d" stroke-width="1.534" stroke-linejoin="round" stroke-linecap="round" /><polyline points="1702.5,752.5 1701.2,772.5 1695,795 1687.5,815 1680,840 1675,860 1672.5,881.2" fill="none" stroke="#e98a9d" stroke-width="1.534" stroke-linejoin="round" stroke-linecap="round" /><polyline points="1702.5,772.5 1715,775 1725,782.5 1737.5,795 1750,800 1775,807.5 1795,817.5 1815,820 1827.5,826.2 1850,820 1870,823.8 1887.5,820 1900,815" fill="none" stroke="#e98a9d" stroke-width="1.534" stroke-linejoin="round" stroke-linecap="round" /><polyline points="1725,782.5 1722.5,800 1712.5,820 1707.5,835 1702.5,860 1700,881.2" fill="none" stroke="#e98a9d" stroke-width="1.298" stroke-linejoin="round" stroke-linecap="round" /><polyline points="1825,760 1820,780 1821.2,800 1825,825 1822.5,850 1817.5,875" fill="none" stroke="#e98a9d" stroke-width="1.534" stroke-linejoin="round" stroke-linecap="round" /><polyline points="1875,822.5 1865,845 1845,862.5 1825,872.5 1813.8,875" fill="none" stroke="#e98a9d" stroke-width="1.534" stroke-linejoin="round" stroke-linecap="round" /><polyline points="1710,752.5 1712.5,772.5 1702.5,772.5" fill="none" stroke="#e98a9d" stroke-width="1.416" stroke-linejoin="round" stroke-linecap="round" /><polyline points="1813.8,875 1800,881.2" fill="none" stroke="#e98a9d" stroke-width="1.416" stroke-linejoin="round" stroke-linecap="round" /><polyline points="1813.8,875 1830,881.2" fill="none" stroke="#e98a9d" stroke-width="1.416" stroke-linejoin="round" stroke-linecap="round" /><polyline points="1813.8,875 1835,872.5" fill="none" stroke="#e98a9d" stroke-width="1.416" stroke-linejoin="round" stroke-linecap="round" /><polyline points="1775,852.5 1770,867.5" fill="none" stroke="#e98a9d" stroke-width="1.298" stroke-linejoin="round" stroke-linecap="round" /><polyline points="1680,800 1690,807.5 1700,812.5" fill="none" stroke="#f5b8a0" stroke-width="1.18" stroke-linejoin="round" stroke-linecap="round" /><polyline points="1850,760 1875,762.5 1900,765" fill="none" stroke="#e98a9d" stroke-width="1.298" stroke-linejoin="round" stroke-linecap="round" /></g>
<g font-family="Liberation Sans, sans-serif"><text x="625" y="209.9" font-size="11.5" fill="#444" text-anchor="middle"  stroke="#fff" stroke-width="2.2" stroke-opacity=".75" paint-order="stroke" stroke-linejoin="round">Sault Ste.</text><text x="625" y="222.6" font-size="11.5" fill="#444" text-anchor="middle"  stroke="#fff" stroke-width="2.2" stroke-opacity=".75" paint-order="stroke" stroke-linejoin="round">Marie</text><text x="795.9" y="213.6" font-size="11.5" fill="#444" text-anchor="middle"  stroke="#fff" stroke-width="2.2" stroke-opacity=".75" paint-order="stroke" stroke-linejoin="round">Elliot Lake</text><circle cx="795.9" cy="219.6" r="1.6" fill="#fff" fill-opacity=".8" stroke="#666" stroke-width=".8"/><text x="965" y="197" font-size="11.5" fill="#444" text-anchor="middle"  stroke="#fff" stroke-width="2.2" stroke-opacity=".75" paint-order="stroke" stroke-linejoin="round">Sudbury</text><text x="840.5" y="305.7" font-size="11.5" fill="#333" text-anchor="middle" font-style="italic" stroke="#fff" stroke-width="2.2" stroke-opacity=".75" paint-order="stroke" stroke-linejoin="round">Manitoulin</text><text x="840.5" y="319.3" font-size="11.5" fill="#333" text-anchor="middle" font-style="italic" stroke="#fff" stroke-width="2.2" stroke-opacity=".75" paint-order="stroke" stroke-linejoin="round">Island</text><text x="1121.2" y="240.2" font-size="11.5" fill="#444" text-anchor="middle"  stroke="#fff" stroke-width="2.2" stroke-opacity=".75" paint-order="stroke" stroke-linejoin="round">North</text><text x="1121.2" y="253.8" font-size="11.5" fill="#444" text-anchor="middle"  stroke="#fff" stroke-width="2.2" stroke-opacity=".75" paint-order="stroke" stroke-linejoin="round">Bay</text><text x="1361.2" y="312" font-size="11.5" fill="#444" text-anchor="middle"  stroke="#fff" stroke-width="2.2" stroke-opacity=".75" paint-order="stroke" stroke-linejoin="round">Pembroke</text><text x="1526.2" y="187.5" font-size="11" fill="#444" text-anchor="middle"  stroke="#fff" stroke-width="2.2" stroke-opacity=".75" paint-order="stroke" stroke-linejoin="round">Mont-Laurier</text><circle cx="1526.2" cy="192.5" r="1.6" fill="#fff" fill-opacity=".8" stroke="#666" stroke-width=".8"/><text x="1807.5" y="189.5" font-size="11" fill="#444" text-anchor="middle"  stroke="#fff" stroke-width="2.2" stroke-opacity=".75" paint-order="stroke" stroke-linejoin="round">Shawinigan</text><circle cx="1806.8" cy="194.5" r="1.6" fill="#fff" fill-opacity=".8" stroke="#666" stroke-width=".8"/><text x="1827" y="237.5" font-size="11" fill="#444" text-anchor="middle"  stroke="#fff" stroke-width="2.2" stroke-opacity=".75" paint-order="stroke" stroke-linejoin="round">Trois-Rivières</text><circle cx="1826.8" cy="225" r="1.6" fill="#fff" fill-opacity=".8" stroke="#666" stroke-width=".8"/><text x="1858.2" y="260.5" font-size="11" fill="#444" text-anchor="start"  stroke="#fff" stroke-width="2.2" stroke-opacity=".75" paint-order="stroke" stroke-linejoin="round">Victoriaville</text><circle cx="1888.8" cy="265" r="1.6" fill="#fff" fill-opacity=".8" stroke="#666" stroke-width=".8"/><text x="1769.5" y="280.5" font-size="11" fill="#444" text-anchor="middle"  stroke="#fff" stroke-width="2.2" stroke-opacity=".75" paint-order="stroke" stroke-linejoin="round">Sorel-Tracy</text><circle cx="1769.5" cy="267.5" r="1.6" fill="#fff" fill-opacity=".8" stroke="#666" stroke-width=".8"/><text x="1832" y="303.2" font-size="11" fill="#444" text-anchor="middle"  stroke="#fff" stroke-width="2.2" stroke-opacity=".75" paint-order="stroke" stroke-linejoin="round">Drummondville</text><circle cx="1832.5" cy="290" r="1.6" fill="#fff" fill-opacity=".8" stroke="#666" stroke-width=".8"/><text x="1677.5" y="321.2" font-size="11" fill="#444" text-anchor="middle"  stroke="#fff" stroke-width="2.2" stroke-opacity=".75" paint-order="stroke" stroke-linejoin="round">Saint-Jérôme</text><circle cx="1677.5" cy="306.8" r="1.6" fill="#fff" fill-opacity=".8" stroke="#666" stroke-width=".8"/><text x="1787" y="323.2" font-size="11" fill="#444" text-anchor="middle"  stroke="#fff" stroke-width="2.2" stroke-opacity=".75" paint-order="stroke" stroke-linejoin="round">Saint-Hyacinthe</text><circle cx="1787.5" cy="327.5" r="1.6" fill="#fff" fill-opacity=".8" stroke="#666" stroke-width=".8"/><text x="833" y="473" font-size="16" fill="#6b8cbe" text-anchor="middle" font-style="italic" stroke="#fff" stroke-width="2.2" stroke-opacity=".75" paint-order="stroke" stroke-linejoin="round">Lake Huron</text><text x="506" y="466" font-size="11.5" fill="#444" text-anchor="start"  stroke="#fff" stroke-width="2.2" stroke-opacity=".75" paint-order="stroke" stroke-linejoin="round">se</text><text x="1125.8" y="470.8" font-size="11.5" fill="#444" text-anchor="middle"  stroke="#fff" stroke-width="2.2" stroke-opacity=".75" paint-order="stroke" stroke-linejoin="round">Orillia</text><circle cx="1125.8" cy="475.8" r="1.6" fill="#fff" fill-opacity=".8" stroke="#666" stroke-width=".8"/><text x="1098" y="502.5" font-size="11.5" fill="#444" text-anchor="middle"  stroke="#fff" stroke-width="2.2" stroke-opacity=".75" paint-order="stroke" stroke-linejoin="round">Barrie</text><circle cx="1098" cy="507.5" r="1.6" fill="#fff" fill-opacity=".8" stroke="#666" stroke-width=".8"/><text x="1237.5" y="513.8" font-size="11.5" fill="#444" text-anchor="middle"  stroke="#fff" stroke-width="2.2" stroke-opacity=".75" paint-order="stroke" stroke-linejoin="round">Peterborough</text><circle cx="1238" cy="518.8" r="1.6" fill="#fff" fill-opacity=".8" stroke="#666" stroke-width=".8"/><text x="1333.8" y="534.5" font-size="11.5" fill="#444" text-anchor="middle"  stroke="#fff" stroke-width="2.2" stroke-opacity=".75" paint-order="stroke" stroke-linejoin="round">Belleville</text><circle cx="1333.8" cy="538.8" r="1.6" fill="#fff" fill-opacity=".8" stroke="#666" stroke-width=".8"/><text x="1425" y="542.5" font-size="11.5" fill="#444" text-anchor="middle"  stroke="#fff" stroke-width="2.2" stroke-opacity=".75" paint-order="stroke" stroke-linejoin="round">Kingston</text><circle cx="1426.5" cy="530" r="1.6" fill="#fff" fill-opacity=".8" stroke="#666" stroke-width=".8"/><text x="1122.5" y="548.8" font-size="11.5" fill="#444" text-anchor="middle"  stroke="#fff" stroke-width="2.2" stroke-opacity=".75" paint-order="stroke" stroke-linejoin="round">Newmarket</text><text x="993" y="383" font-size="13.5" fill="#6b8cbe" text-anchor="middle" font-style="italic" stroke="#fff" stroke-width="2.2" stroke-opacity=".75" paint-order="stroke" stroke-linejoin="round">Georgian</text><text x="993" y="399" font-size="13.5" fill="#6b8cbe" text-anchor="middle" font-style="italic" stroke="#fff" stroke-width="2.2" stroke-opacity=".75" paint-order="stroke" stroke-linejoin="round">Bay</text><text x="970" y="463.5" font-size="11.5" fill="#444" text-anchor="middle"  stroke="#fff" stroke-width="2.2" stroke-opacity=".75" paint-order="stroke" stroke-linejoin="round">Owen</text><text x="970" y="476" font-size="11.5" fill="#444" text-anchor="middle"  stroke="#fff" stroke-width="2.2" stroke-opacity=".75" paint-order="stroke" stroke-linejoin="round">Sound</text><text x="1506.2" y="350.5" font-size="13.5" fill="#333" text-anchor="middle"  stroke="#fff" stroke-width="2.2" stroke-opacity=".75" paint-order="stroke" stroke-linejoin="round">Ottawa</text><circle cx="1506.2" cy="358.8" r="2.4" fill="#fff" fill-opacity=".8" stroke="#666" stroke-width=".8"/><text x="1719.5" y="363.2" font-size="14.5" fill="#333" text-anchor="middle"  stroke="#fff" stroke-width="2.2" stroke-opacity=".75" paint-order="stroke" stroke-linejoin="round">Montréal</text><circle cx="1720" cy="347.5" r="2.6" fill="#fff" fill-opacity=".8" stroke="#666" stroke-width=".8"/><text x="1634.5" y="380" font-size="11.5" fill="#444" text-anchor="middle"  stroke="#fff" stroke-width="2.2" stroke-opacity=".75" paint-order="stroke" stroke-linejoin="round">Salaberry-</text><text x="1626.2" y="393" font-size="11.5" fill="#444" text-anchor="middle"  stroke="#fff" stroke-width="2.2" stroke-opacity=".75" paint-order="stroke" stroke-linejoin="round">de-Valleyfield</text><circle cx="1665.5" cy="382" r="1.6" fill="#fff" fill-opacity=".8" stroke="#666" stroke-width=".8"/><text x="1605" y="412" font-size="11.5" fill="#444" text-anchor="middle"  stroke="#fff" stroke-width="2.2" stroke-opacity=".75" paint-order="stroke" stroke-linejoin="round">Cornwall</text><circle cx="1604.5" cy="417" r="1.6" fill="#fff" fill-opacity=".8" stroke="#666" stroke-width=".8"/><text x="1507.5" y="473.8" font-size="11.5" fill="#444" text-anchor="middle"  stroke="#fff" stroke-width="2.2" stroke-opacity=".75" paint-order="stroke" stroke-linejoin="round">Brockville</text><circle cx="1507.5" cy="478.2" r="1.6" fill="#fff" fill-opacity=".8" stroke="#666" stroke-width=".8"/><text x="1810" y="357" font-size="11.5" fill="#444" text-anchor="middle"  stroke="#fff" stroke-width="2.2" stroke-opacity=".75" paint-order="stroke" stroke-linejoin="round">Granby</text><circle cx="1810.5" cy="361.8" r="1.6" fill="#fff" fill-opacity=".8" stroke="#666" stroke-width=".8"/><text x="1865" y="373.8" font-size="11.5" fill="#444" text-anchor="start"  stroke="#fff" stroke-width="2.2" stroke-opacity=".75" paint-order="stroke" stroke-linejoin="round">Sherbrooke</text><text x="1755.5" y="389.5" font-size="11.5" fill="#444" text-anchor="middle"  stroke="#fff" stroke-width="2.2" stroke-opacity=".75" paint-order="stroke" stroke-linejoin="round">Saint-Jean-</text><text x="1755.5" y="402.5" font-size="11.5" fill="#444" text-anchor="middle"  stroke="#fff" stroke-width="2.2" stroke-opacity=".75" paint-order="stroke" stroke-linejoin="round">sur-Richelieu</text><circle cx="1755.5" cy="375.2" r="1.6" fill="#fff" fill-opacity=".8" stroke="#666" stroke-width=".8"/><text x="1735" y="476.5" font-size="11.5" fill="#444" text-anchor="middle"  stroke="#fff" stroke-width="2.2" stroke-opacity=".75" paint-order="stroke" stroke-linejoin="round">Plattsburgh</text><circle cx="1735" cy="463.8" r="1.6" fill="#fff" fill-opacity=".8" stroke="#666" stroke-width=".8"/><text x="1759.5" y="507.5" font-size="11.5" fill="#444" text-anchor="middle"  stroke="#fff" stroke-width="2.2" stroke-opacity=".75" paint-order="stroke" stroke-linejoin="round">Burlington</text><circle cx="1760" cy="495.2" r="1.6" fill="#fff" fill-opacity=".8" stroke="#666" stroke-width=".8"/><text x="1824.2" y="520.8" font-size="11.5" fill="#444" text-anchor="middle"  stroke="#fff" stroke-width="2.2" stroke-opacity=".75" paint-order="stroke" stroke-linejoin="round">Montpelier</text><circle cx="1825" cy="525.8" r="1.6" fill="#fff" fill-opacity=".8" stroke="#666" stroke-width=".8"/><text x="689.2" y="713.5" font-size="11.5" fill="#444" text-anchor="middle"  stroke="#fff" stroke-width="2.2" stroke-opacity=".75" paint-order="stroke" stroke-linejoin="round">Flint</text><circle cx="689.2" cy="701.2" r="1.6" fill="#fff" fill-opacity=".8" stroke="#666" stroke-width=".8"/><text x="601.2" y="735.8" font-size="11.5" fill="#444" text-anchor="middle"  stroke="#fff" stroke-width="2.2" stroke-opacity=".75" paint-order="stroke" stroke-linejoin="round">Lansing</text><circle cx="601.5" cy="740.8" r="1.6" fill="#fff" fill-opacity=".8" stroke="#666" stroke-width=".8"/><text x="820.8" y="702" font-size="11.5" fill="#444" text-anchor="middle"  stroke="#fff" stroke-width="2.2" stroke-opacity=".75" paint-order="stroke" stroke-linejoin="round">Sarnia</text><circle cx="820.8" cy="707" r="1.6" fill="#fff" fill-opacity=".8" stroke="#666" stroke-width=".8"/><text x="937.5" y="655.5" font-size="11.5" fill="#444" text-anchor="middle"  stroke="#fff" stroke-width="2.2" stroke-opacity=".75" paint-order="stroke" stroke-linejoin="round">Stratford</text><circle cx="966.5" cy="651.2" r="1.6" fill="#fff" fill-opacity=".8" stroke="#666" stroke-width=".8"/><text x="938.8" y="718.2" font-size="11.5" fill="#444" text-anchor="middle"  stroke="#fff" stroke-width="2.2" stroke-opacity=".75" paint-order="stroke" stroke-linejoin="round">London</text><circle cx="938" cy="705.8" r="1.6" fill="#fff" fill-opacity=".8" stroke="#666" stroke-width=".8"/><text x="945" y="747" font-size="11.5" fill="#444" text-anchor="middle"  stroke="#fff" stroke-width="2.2" stroke-opacity=".75" paint-order="stroke" stroke-linejoin="round">St. Thomas</text><circle cx="945" cy="733.8" r="1.6" fill="#fff" fill-opacity=".8" stroke="#666" stroke-width=".8"/><text x="960.5" y="697.5" font-size="11.5" fill="#444" text-anchor="start"  stroke="#fff" stroke-width="2.2" stroke-opacity=".75" paint-order="stroke" stroke-linejoin="round">Woodstock</text><text x="1314.2" y="563" font-size="11.5" fill="#444" text-anchor="middle"  stroke="#fff" stroke-width="2.2" stroke-opacity=".75" paint-order="stroke" stroke-linejoin="round">Quinte</text><text x="1314.2" y="576.5" font-size="11.5" fill="#444" text-anchor="middle"  stroke="#fff" stroke-width="2.2" stroke-opacity=".75" paint-order="stroke" stroke-linejoin="round">West</text><circle cx="1314.2" cy="549.2" r="1.6" fill="#fff" fill-opacity=".8" stroke="#666" stroke-width=".8"/><text x="1208.8" y="581.2" font-size="11.5" fill="#444" text-anchor="middle"  stroke="#fff" stroke-width="2.2" stroke-opacity=".75" paint-order="stroke" stroke-linejoin="round">Oshawa</text><circle cx="1183" cy="577.5" r="1.6" fill="#fff" fill-opacity=".8" stroke="#666" stroke-width=".8"/><text x="1130" y="605.5" font-size="13.5" fill="#333" text-anchor="middle"  stroke="#fff" stroke-width="2.2" stroke-opacity=".75" paint-order="stroke" stroke-linejoin="round">Toronto</text><circle cx="1129.5" cy="612" r="2.2" fill="#fff" fill-opacity=".8" stroke="#666" stroke-width=".8"/><text x="1103.2" y="636.8" font-size="14" fill="#333" text-anchor="middle"  stroke="#fff" stroke-width="2.2" stroke-opacity=".75" paint-order="stroke" stroke-linejoin="round">Mississauga</text><text x="1015" y="652" font-size="11.5" fill="#444" text-anchor="middle"  stroke="#fff" stroke-width="2.2" stroke-opacity=".75" paint-order="stroke" stroke-linejoin="round">Kitchener</text><circle cx="1015.8" cy="639.5" r="1.6" fill="#fff" fill-opacity=".8" stroke="#666" stroke-width=".8"/><text x="1050.8" y="661.2" font-size="13.5" fill="#333" text-anchor="start"  stroke="#fff" stroke-width="2.2" stroke-opacity=".75" paint-order="stroke" stroke-linejoin="round">Hamilton</text><text x="1039.2" y="679" font-size="11.5" fill="#444" text-anchor="middle"  stroke="#fff" stroke-width="2.2" stroke-opacity=".75" paint-order="stroke" stroke-linejoin="round">Brantford</text><circle cx="1039.2" cy="683.8" r="1.6" fill="#fff" fill-opacity=".8" stroke="#666" stroke-width=".8"/><text x="1018" y="697.5" font-size="11.5" fill="#444" text-anchor="end"  stroke="#fff" stroke-width="2.2" stroke-opacity=".75" paint-order="stroke" stroke-linejoin="round">Woodstock</text><circle cx="988.8" cy="684.5" r="1.6" fill="#fff" fill-opacity=".8" stroke="#666" stroke-width=".8"/><text x="1143.8" y="694.2" font-size="11.5" fill="#444" text-anchor="middle"  stroke="#fff" stroke-width="2.2" stroke-opacity=".75" paint-order="stroke" stroke-linejoin="round">St. Catharines</text><text x="1181.2" y="714.5" font-size="11.5" fill="#444" text-anchor="middle"  stroke="#fff" stroke-width="2.2" stroke-opacity=".75" paint-order="stroke" stroke-linejoin="round">Buffalo</text><circle cx="1180.5" cy="719.2" r="1.6" fill="#fff" fill-opacity=".8" stroke="#666" stroke-width=".8"/><text x="1101.8" y="723.2" font-size="11.5" fill="#444" text-anchor="middle"  stroke="#fff" stroke-width="2.2" stroke-opacity=".75" paint-order="stroke" stroke-linejoin="round">Port Colborne</text><circle cx="1143" cy="719.5" r="1.6" fill="#fff" fill-opacity=".8" stroke="#666" stroke-width=".8"/><text x="1310" y="676.5" font-size="11.5" fill="#444" text-anchor="middle"  stroke="#fff" stroke-width="2.2" stroke-opacity=".75" paint-order="stroke" stroke-linejoin="round">Rochester</text><circle cx="1310" cy="681.2" r="1.6" fill="#fff" fill-opacity=".8" stroke="#666" stroke-width=".8"/><text x="1303.2" y="601.2" font-size="13.5" fill="#6b8cbe" text-anchor="middle" font-style="italic" stroke="#fff" stroke-width="2.2" stroke-opacity=".75" paint-order="stroke" stroke-linejoin="round">Lake Ontario</text><text x="1133.8" y="578" font-size="11.5" fill="#444" text-anchor="middle"  stroke="#fff" stroke-width="2.2" stroke-opacity=".75" paint-order="stroke" stroke-linejoin="round">Markham</text><text x="1437" y="691.8" font-size="11.5" fill="#444" text-anchor="start"  stroke="#fff" stroke-width="2.2" stroke-opacity=".75" paint-order="stroke" stroke-linejoin="round">Syracuse</text><text x="1432.5" y="737.5" font-size="12" fill="#8d6b9b" text-anchor="start" font-style="italic" stroke="#fff" stroke-width="2.2" stroke-opacity=".75" paint-order="stroke" stroke-linejoin="round">New York</text><text x="1460" y="692" font-size="11.5" fill="#444" text-anchor="middle"  stroke="#fff" stroke-width="2.2" stroke-opacity=".75" paint-order="stroke" stroke-linejoin="round">Syracuse</text><circle cx="1460" cy="697" r="1.6" fill="#fff" fill-opacity=".8" stroke="#666" stroke-width=".8"/><text x="1553.2" y="684.5" font-size="11.5" fill="#444" text-anchor="middle"  stroke="#fff" stroke-width="2.2" stroke-opacity=".75" paint-order="stroke" stroke-linejoin="round">Utica</text><circle cx="1553.2" cy="689.2" r="1.6" fill="#fff" fill-opacity=".8" stroke="#666" stroke-width=".8"/><text x="1457.5" y="738" font-size="12.5" fill="#8d6b9b" text-anchor="middle" font-style="italic" stroke="#fff" stroke-width="2.2" stroke-opacity=".75" paint-order="stroke" stroke-linejoin="round">New York</text><text x="1704.2" y="747.5" font-size="11.5" fill="#444" text-anchor="middle"  stroke="#fff" stroke-width="2.2" stroke-opacity=".75" paint-order="stroke" stroke-linejoin="round">Albany</text><circle cx="1704.2" cy="752" r="1.6" fill="#fff" fill-opacity=".8" stroke="#666" stroke-width=".8"/><text x="1770" y="729.5" font-size="11.5" fill="#444" text-anchor="middle"  stroke="#fff" stroke-width="2.2" stroke-opacity=".75" paint-order="stroke" stroke-linejoin="round">North</text><text x="1770" y="742.5" font-size="11.5" fill="#444" text-anchor="middle"  stroke="#fff" stroke-width="2.2" stroke-opacity=".75" paint-order="stroke" stroke-linejoin="round">Adams</text><circle cx="1770" cy="747.5" r="1.6" fill="#fff" fill-opacity=".8" stroke="#666" stroke-width=".8"/><text x="1804.5" y="583.2" font-size="12.5" fill="#8d6b9b" text-anchor="middle" font-style="italic" stroke="#fff" stroke-width="2.2" stroke-opacity=".75" paint-order="stroke" stroke-linejoin="round">Vermont</text><text x="1857.5" y="626.2" font-size="11.5" fill="#444" text-anchor="middle"  stroke="#fff" stroke-width="2.2" stroke-opacity=".75" paint-order="stroke" stroke-linejoin="round">Lebanon</text><circle cx="1857.5" cy="612.8" r="1.6" fill="#fff" fill-opacity=".8" stroke="#666" stroke-width=".8"/><text x="1873.8" y="645" font-size="11.5" fill="#444" text-anchor="start"  stroke="#fff" stroke-width="2.2" stroke-opacity=".75" paint-order="stroke" stroke-linejoin="round">Franklin</text><text x="1848.2" y="663.2" font-size="11.5" fill="#444" text-anchor="middle"  stroke="#fff" stroke-width="2.2" stroke-opacity=".75" paint-order="stroke" stroke-linejoin="round">Claremont</text><circle cx="1848.2" cy="650.8" r="1.6" fill="#fff" fill-opacity=".8" stroke="#666" stroke-width=".8"/><text x="1855" y="724.5" font-size="11.5" fill="#444" text-anchor="middle"  stroke="#fff" stroke-width="2.2" stroke-opacity=".75" paint-order="stroke" stroke-linejoin="round">Keene</text><circle cx="1855" cy="712.5" r="1.6" fill="#fff" fill-opacity=".8" stroke="#666" stroke-width=".8"/><text x="1863.8" y="756.8" font-size="11.5" fill="#444" text-anchor="start"  stroke="#fff" stroke-width="2.2" stroke-opacity=".75" paint-order="stroke" stroke-linejoin="round">Gardner</text><text x="1887.5" y="564.2" font-size="12.5" fill="#8d6b9b" text-anchor="start" font-style="italic" stroke="#fff" stroke-width="2.2" stroke-opacity=".75" paint-order="stroke" stroke-linejoin="round">New</text><text x="755.5" y="790" font-size="14" fill="#333" text-anchor="middle"  stroke="#fff" stroke-width="2.2" stroke-opacity=".75" paint-order="stroke" stroke-linejoin="round">Detroit</text><circle cx="755.5" cy="796.2" r="2.2" fill="#fff" fill-opacity=".8" stroke="#666" stroke-width=".8"/><text x="685.5" y="800" font-size="11.5" fill="#444" text-anchor="middle"  stroke="#fff" stroke-width="2.2" stroke-opacity=".75" paint-order="stroke" stroke-linejoin="round">Ann Arbor</text><circle cx="685.5" cy="804.5" r="1.6" fill="#fff" fill-opacity=".8" stroke="#666" stroke-width=".8"/><text x="843.2" y="798.8" font-size="11.5" fill="#444" text-anchor="middle"  stroke="#fff" stroke-width="2.2" stroke-opacity=".75" paint-order="stroke" stroke-linejoin="round">Chatham</text><circle cx="843" cy="785.8" r="1.6" fill="#fff" fill-opacity=".8" stroke="#666" stroke-width=".8"/><text x="707.5" y="879.5" font-size="11.5" fill="#444" text-anchor="middle"  stroke="#fff" stroke-width="2.2" stroke-opacity=".75" paint-order="stroke" stroke-linejoin="round">Toledo</text><text x="524.5" y="797" font-size="11.5" fill="#444" text-anchor="end"  stroke="#fff" stroke-width="2.2" stroke-opacity=".75" paint-order="stroke" stroke-linejoin="round">Kalamazoo</text><text x="940.5" y="825.8" font-size="13.5" fill="#6b8cbe" text-anchor="middle" font-style="italic" stroke="#fff" stroke-width="2.2" stroke-opacity=".75" paint-order="stroke" stroke-linejoin="round">Lake Erie</text><text x="1058" y="819.5" font-size="11.5" fill="#444" text-anchor="middle"  stroke="#fff" stroke-width="2.2" stroke-opacity=".75" paint-order="stroke" stroke-linejoin="round">Erie</text><circle cx="1057.5" cy="823.8" r="1.6" fill="#fff" fill-opacity=".8" stroke="#666" stroke-width=".8"/><text x="1483.8" y="841.8" font-size="11.5" fill="#444" text-anchor="middle"  stroke="#fff" stroke-width="2.2" stroke-opacity=".75" paint-order="stroke" stroke-linejoin="round">Binghamton</text><circle cx="1483.8" cy="828.2" r="1.6" fill="#fff" fill-opacity=".8" stroke="#666" stroke-width=".8"/><text x="1749.5" y="792.5" font-size="11.5" fill="#444" text-anchor="middle"  stroke="#fff" stroke-width="2.2" stroke-opacity=".75" paint-order="stroke" stroke-linejoin="round">Pittsfie</text><circle cx="1755.5" cy="780" r="1.6" fill="#fff" fill-opacity=".8" stroke="#666" stroke-width=".8"/><text x="1822.5" y="770.8" font-size="11.5" fill="#444" text-anchor="middle"  stroke="#fff" stroke-width="2.2" stroke-opacity=".75" paint-order="stroke" stroke-linejoin="round">Greenfield</text><circle cx="1822.5" cy="757.5" r="1.6" fill="#fff" fill-opacity=".8" stroke="#666" stroke-width=".8"/><text x="1815" y="792.8" font-size="11.5" fill="#444" text-anchor="middle"  stroke="#fff" stroke-width="2.2" stroke-opacity=".75" paint-order="stroke" stroke-linejoin="round">Northampton</text><circle cx="1815" cy="797" r="1.6" fill="#fff" fill-opacity=".8" stroke="#666" stroke-width=".8"/><text x="1828.2" y="821.5" font-size="11.5" fill="#444" text-anchor="middle"  stroke="#fff" stroke-width="2.2" stroke-opacity=".75" paint-order="stroke" stroke-linejoin="round">Springfield</text><circle cx="1828.2" cy="826.2" r="1.6" fill="#fff" fill-opacity=".8" stroke="#666" stroke-width=".8"/><text x="1878" y="782.5" font-size="11.5" fill="#444" text-anchor="start"  stroke="#fff" stroke-width="2.2" stroke-opacity=".75" paint-order="stroke" stroke-linejoin="round">Leominster</text><text x="1876.2" y="815" font-size="11.5" fill="#444" text-anchor="start"  stroke="#fff" stroke-width="2.2" stroke-opacity=".75" paint-order="stroke" stroke-linejoin="round">Worcester</text><text x="1886.2" y="840" font-size="12.5" fill="#8d6b9b" text-anchor="start" font-style="italic" stroke="#fff" stroke-width="2.2" stroke-opacity=".75" paint-order="stroke" stroke-linejoin="round">Massachusetts</text><text x="1736.2" y="873.2" font-size="11.5" fill="#444" text-anchor="middle"  stroke="#fff" stroke-width="2.2" stroke-opacity=".75" paint-order="stroke" stroke-linejoin="round">Torrington</text><circle cx="1768.8" cy="868.8" r="1.6" fill="#fff" fill-opacity=".8" stroke="#666" stroke-width=".8"/><text x="1813" y="869.5" font-size="11.5" fill="#444" text-anchor="middle"  stroke="#fff" stroke-width="2.2" stroke-opacity=".75" paint-order="stroke" stroke-linejoin="round">Hartford</text><circle cx="1813.8" cy="874.2" r="1.6" fill="#fff" fill-opacity=".8" stroke="#666" stroke-width=".8"/></g>
<g fill="#800080" fill-opacity="0.7"><circle cx="625" cy="196.4" r="7.6"/><circle cx="964" cy="204.5" r="11"/><circle cx="1121.25" cy="227.5" r="8"/><circle cx="1360" cy="303.25" r="7.5"/><circle cx="1098.8" cy="503.8" r="20.75"/><circle cx="1238" cy="519.5" r="12"/><circle cx="1333.2" cy="535.8" r="10"/><circle cx="1422" cy="530" r="12"/><circle cx="970" cy="481" r="12"/><circle cx="1499.7" cy="369.8" r="40"/><circle cx="1603.8" cy="415.8" r="13.25"/><circle cx="1505" cy="475" r="22.5"/><circle cx="820.8" cy="705" r="18"/><circle cx="964.2" cy="652" r="10"/><circle cx="938.2" cy="706.2" r="24.25"/><circle cx="948.2" cy="734.5" r="11"/><circle cx="1129" cy="610" r="79"/><circle cx="1096.75" cy="613" r="54.5"/><circle cx="1120" cy="554.25" r="44.5"/><circle cx="1175" cy="577.5" r="35"/><circle cx="1090" cy="645" r="28.75"/><circle cx="1080" cy="667.5" r="26"/><circle cx="1013.75" cy="638.75" r="30"/><circle cx="1043" cy="630" r="21"/><circle cx="1038.25" cy="683" r="14.25"/><circle cx="1143.75" cy="687.5" r="26.75"/><circle cx="1035.75" cy="723.75" r="18"/><circle cx="1241.25" cy="567" r="16.75"/><circle cx="756.2" cy="799.5" r="28.75"/><circle cx="840.5" cy="785.8" r="10"/></g>

</svg></div>
<div class="zc"><div class="ln"></div>
<svg width="33" height="66" viewBox="0 0 33 66" style="position:absolute;left:0;top:0"><path d="M10 17h13M16.5 10.5v13M10.5 51h12" stroke="#000" stroke-width="2.2" fill="none"/></svg></div>
</body></html>
